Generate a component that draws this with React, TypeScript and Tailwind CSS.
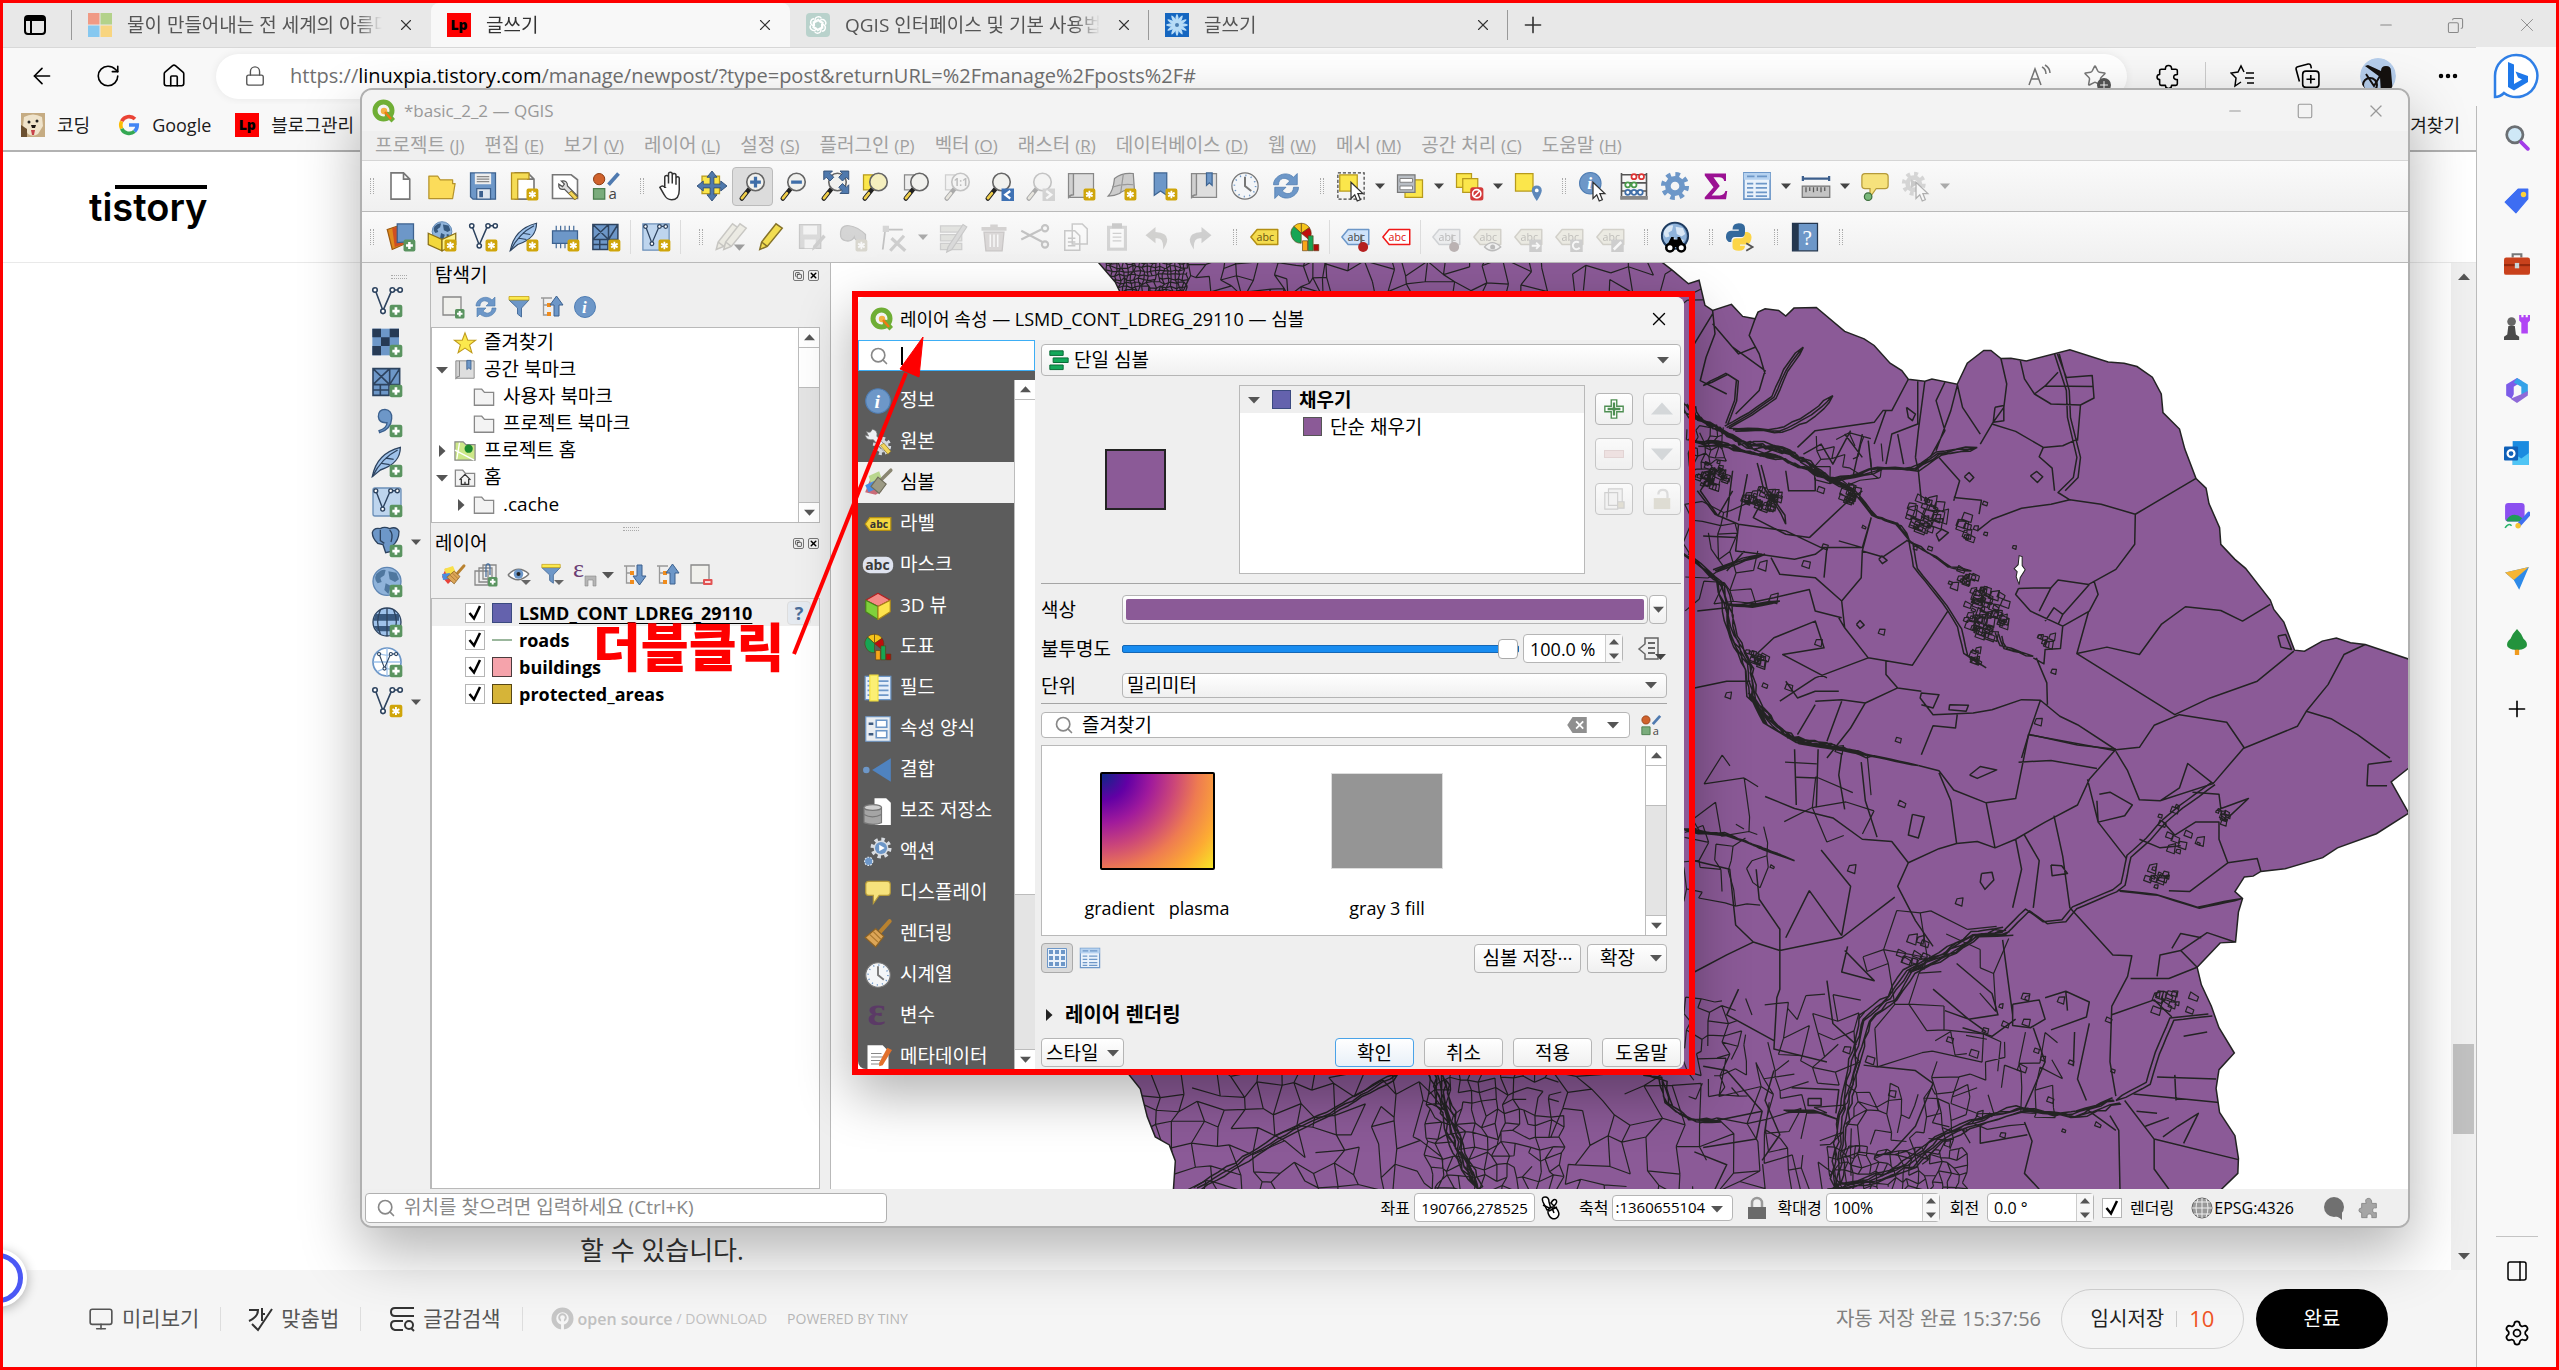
import React from 'react';
import {
  ArrowLeft,
  RotateCw,
  House,
  Lock,
  Search,
  Star,
  Plus,
  X,
  Minus,
  Square,
  Copy,
  Settings,
  PanelRight,
  Ellipsis,
  Monitor,
} from 'lucide-react';

/* ------------------------------------------------------------------ */
/* icon artwork, everything on a 24x24 grid                            */
/* ------------------------------------------------------------------ */

const BLUE = '#6d97c8';
const NAVY = '#2d435f';

const NewBadge = () => (
  <g>
    <rect x="14" y="14" width="9.5" height="9.5" rx="1.5" fill="#cfa50a" />
    <path d="M18.7 15.8v6M16.1 17.3l5.2 3M21.3 17.3l-5.2 3" stroke="#fff" strokeWidth="1.4" />
  </g>
);

const AddBadge = () => (
  <g>
    <rect x="14" y="14" width="9.5" height="9.5" rx="1.5" fill="#5a9460" />
    <path d="M18.7 16v5.6M16 18.8h5.5" stroke="#fff" strokeWidth="2" />
  </g>
);

const Lens = ({ fill = '#f1f1ee' }: { fill?: string }) => (
  <g>
    <path d="M9 14.5 3 22" stroke="#222" strokeWidth="3.6" strokeLinecap="round" />
    <path d="M6.3 17.8 3.2 21.7" stroke="#f0cf4b" strokeWidth="2.2" strokeLinecap="round" />
    <circle cx="14" cy="8.8" r="7" fill={fill} stroke="#666" strokeWidth="1.3" />
  </g>
);

const VectorShape = () => (
  <g fill="none" stroke={NAVY} strokeWidth="1.2">
    <path d="M3.5 4 9 18.5 15.5 3.5M17 3h4" />
    <circle cx="3" cy="3" r="1.7" fill="#fff" />
    <circle cx="9" cy="19" r="1.7" fill="#fff" />
    <circle cx="16" cy="3" r="1.7" fill="#fff" />
    <circle cx="21.8" cy="3" r="1.7" fill="#fff" />
  </g>
);

const Feather = () => (
  <g>
    <path d="M1 23C3 12 10 4 22 1c0 7-3 13-15 17z" fill="#9fc2ea" stroke={NAVY} strokeWidth="1" />
    <path d="M1 23C6 13 12 7 20 3M8 13l6 1M11 9l6 1" stroke={NAVY} strokeWidth="1" fill="none" />
  </g>
);

const MeshGrid = () => (
  <g stroke={NAVY} strokeWidth="1.2" fill={BLUE}>
    <path d="M1.5 2h20v12h-20zM1.5 14h12v8h-12zM14 2v12M1.5 2l12.5 12M14 2 1.5 14M21.5 2 14 14M7 14v8M1.5 18h12" />
  </g>
);

const Globe = ({ land = '#4f779f' }: { land?: string }) => (
  <g>
    <circle cx="12" cy="11.5" r="10.5" fill="#8fb3da" stroke="#5f86b3" />
    <path d="M4 6q4-4 7-3l-1 4-3 2 1 3-3 1q-3-3-1-7zM13 4l6 1 2 5-3 2-4-2zM11 13l4 2-2 6-3-3zM17 14l3 1-3 4z" fill={land} />
  </g>
);

const LabelTag = ({ fill = '#f4dc4e', line = '#b38f12', text = '#6b5510' }) => (
  <g>
    <path d="M1.5 12 6.5 6H23v12H6.5z" fill={fill} stroke={line} strokeWidth="1.2" strokeLinejoin="round" />
    <text x="6" y="15" fontSize="8.5" fontFamily="Open Sans, sans-serif" fill={text}>abc</text>
  </g>
);

const Doc = ({ x = 4 }: { x?: number }) => (
  <path d={`M${x} 1.5h10l5 5v16h-15zM${x + 10} 1.5v5h5`} fill="#fff" stroke="#777" strokeWidth="1.3" />
);

const Refresh = () => (
  <g fill={BLUE} stroke="#4a78ad" strokeWidth=".6">
    <path d="M2 11C2 4 12-1 18 5l3-3v9h-9l3-3C11 4 6 6 6 11z" />
    <path d="M22 13c0 7-10 12-16 6l-3 3v-9h9l-3 3c4 4 9 2 9-3z" />
  </g>
);

const Gear = ({ fill = BLUE }: { fill?: string }) => (
  <g>
    <circle cx="12" cy="12" r="9" fill="none" stroke={fill} strokeWidth="4.5" strokeDasharray="3.5 3.57" />
    <circle cx="12" cy="12" r="5.7" fill="none" stroke={fill} strokeWidth="4.5" />
  </g>
);

const Clock = () => (
  <g>
    <circle cx="12" cy="12" r="10.5" fill="#f4f6f8" stroke="#777" />
    <circle cx="12" cy="12" r="8.5" fill="none" stroke={BLUE} strokeWidth="1.3" strokeDasharray="1 3.45" />
    <path d="M12 4.5V12l5 4" stroke="#777" strokeWidth="1.6" fill="none" />
  </g>
);

const Book = () => (
  <g>
    <path d="M2 2h4v17q-4 0-4 3z" fill="#d0d0d0" stroke="#888" />
    <path d="M6 2h16v19H3q0-2 3-2z" fill="#dedede" stroke="#888" />
  </g>
);

const Info = () => (
  <g>
    <circle cx="12" cy="12" r="10.5" fill={BLUE} stroke="#4f7db3" />
    <text x="9" y="18" fontSize="17" fontStyle="italic" fontWeight="bold" fontFamily="Liberation Serif, serif" fill="#fff">i</text>
  </g>
);

const Funnel = () => (
  <g>
    <path d="M2 5h20l-7.5 8v9l-4-3v-6z" fill={BLUE} stroke="#4a6f9c" />
    <path d="M2 1.5h20V5H2z" fill="#fbe94d" stroke="#c4a21a" strokeWidth=".8" />
  </g>
);

const TreeArrow = ({ down = false }: { down?: boolean }) => (
  <g>
    <path d="M1 3h11M3.5 3v17h4M3.5 10h4" stroke="#999" strokeWidth="1.3" fill="none" />
    <path d="M7 8h4v4H7zM7 17h4v4H7z" fill="#f08c1c" />
    <path d={down ? 'M14 2h5v11h4l-6.5 9L10 13h4z' : 'M14 21h5V10h4l-6.5-9L10 10h4z'} fill={BLUE} stroke="#3c618f" />
  </g>
);

const Folder = () => <path d="M1.5 3.5h8l3 3.5h10v14h-21z" fill="#f3f3f3" stroke="#888" strokeWidth="1.4" />;

const Pencil = () => (
  <path d="M3 22l1.5-6L16 1.5l5 3.5L9 19.5zM4.5 16 9 19.5" fill="#f2dd50" stroke="#86732a" strokeWidth="1.2" />
);

const Brush = () => (
  <g>
    <path d="M22 1 14 10" stroke="#b9822f" strokeWidth="3.5" strokeLinecap="round" />
    <path d="M10 7.5 17 14l-7 9-9-8z" fill="#dca557" stroke="#8f6322" />
    <path d="M5 12.5 12 19M8 10l6.5 6.5" stroke="#a9772e" />
  </g>
);

const PieBars = () => (
  <g stroke="#5a3c10" strokeWidth=".5">
    <path d="M9 9V1a8 8 0 0 1 6.5 3.5z" fill="#f6c51b" />
    <path d="M9 9 3 3.5A8 8 0 0 1 9 1z" fill="#f6c51b" />
    <path d="M9 9l6.5-4.5A8 8 0 0 1 15 14z" fill="#c00d0d" />
    <path d="M9 9v8A8 8 0 0 1 3 3.5z" fill="#17a554" />
    <path d="M10 15h4v8h-4z" fill="#f9a51a" />
    <path d="M14.5 11h4v12h-4z" fill="#17a554" />
    <path d="M19 18h4v5h-4z" fill="#b30c0c" />
  </g>
);

const Bubble = () => (
  <path d="M4 2h16q2.5 0 2.5 2.5v7q0 2.5-2.5 2.5h-7l-5 7v-7H4q-2.5 0-2.5-2.5v-7Q1.5 2 4 2z" fill="#f6e27c" stroke="#b59a3a" />
);

const Cursor = () => <path d="M12 9v13l3-3 2 5 2.5-1-2-5h4z" fill="#fff" stroke="#333" strokeWidth="1" />;

const StyleMgr = () => (
  <g>
    <circle cx="6.5" cy="6.5" r="4.5" fill="#d0622c" stroke="#8d3c14" strokeWidth=".8" />
    <path d="M14 11 22 2" stroke="#4f7ab0" strokeWidth="3" />
    <path d="M2 14h9v8.5H2z" fill="#7aac7c" stroke="#4a7d4d" />
    <text x="14" y="22.5" fontSize="12" fontFamily="Open Sans, sans-serif" fill="#444">a</text>
  </g>
);

const TableIcon = () => (
  <g>
    <path d="M1.5 1.5h21v21h-21z" fill="#eaf2fb" stroke={BLUE} strokeWidth="1.3" />
    <path d="M1.5 1.5h21V7h-21z" fill="#b6d2f0" />
    <path d="M4 4.3h6M12 4.3h8M4 10h5M11 10h9M4 13.5h5M11 13.5h9M4 17h5M11 17h9M4 20h5M11 20h9" stroke={BLUE} strokeWidth="1.4" />
  </g>
);

const art: Record<string, React.ReactNode> = {
  new: <Doc />,
  open: <path d="M1.5 4h7l2 3h10v3h2l-2 12H1.5z" fill="#fbdc5a" stroke="#b5932b" strokeLinejoin="round" />,
  save: (
    <g>
      <path d="M2 1.5h20v21H4l-2-2z" fill={BLUE} stroke="#3d618e" />
      <path d="M5.5 2h13v8.5h-13z" fill="#eee" />
      <path d="M7 4.5h10M7 6.5h10M7 8.5h10" stroke="#888" />
      <path d="M7 14h11v8.5H7z" fill="#dfe6ee" stroke="#3d618e" />
      <path d="M9 16h3v5H9z" fill="#3d618e" />
    </g>
  ),
  layoutNew: (
    <g>
      <Doc x={5} />
      <path d="M2 1.5h14v5H7v16H2z" fill="#f5dc55" stroke="#b38f1c" />
      <NewBadge />
    </g>
  ),
  layoutMgr: (
    <g>
      <path d="M2 3h15l5 4v15H2z" fill="#fff" stroke="#777" strokeWidth="1.3" />
      <path d="M9 8q5-1 5 4l8 8-2.5 2.5-8-8q-5 1-4.5-4l3 2 1.5-2z" fill="#ddd" stroke="#555" />
      <path d="M17 16l5 5-2 2-5-5z" fill="#f2d559" stroke="#8f7420" strokeWidth=".8" />
    </g>
  ),
  style: <StyleMgr />,
  hand: (
    <path d="M7 13V5q0-1.5 1.5-1.5T10 5v5V2.5Q10 1 11.5 1T13 2.5V10 3.5Q13 2 14.5 2T16 3.5V11 6q0-1.5 1.3-1.5T18.600 6v9q0 8-6 8-4 0-6-4l-3.5-6q2-2 4 0z" fill="#fff" stroke="#333" strokeWidth="1.2" />
  ),
  pan: (
    <g>
      <path d="M4 4h14v14H4z" fill="#fbe64b" stroke="#b79a1c" />
      <path d="M12 0l4 5h-2.5v5.500H19V8l5 4-5 4v-2.500h-5.500V19H16l-4 5-4-5h2.500v-5.500H5V16l-5-4 5-4v2.500h5.500V5H8z" fill="#4f79ad" stroke="#2e4c73" strokeWidth=".7" />
    </g>
  ),
  zoomIn: <g><Lens /><path d="M14 4.5v8.6M9.7 8.8h8.6" stroke="#3f6ea8" strokeWidth="2.6" /></g>,
  zoomOut: <g><Lens /><path d="M9.7 8.8h8.6" stroke="#3f6ea8" strokeWidth="2.6" /></g>,
  zoomFull: (
    <g>
      <Lens />
      <path d="M3 0h7L8 2l3 3-3 3-3-3-2 2zM23 0h-7l2 2-3 3 3 3 3-3 2 2zM23 18h-7l2-2-3-3 3-3 3 3 2-2z" fill="#4f79ad" stroke="#2e4c73" strokeWidth=".7" />
    </g>
  ),
  zoomSel: <g><path d="M2 3h9v12H2z" fill="#fbe64b" stroke="#b79a1c" /><Lens fill="#f5efbe" /></g>,
  zoomLayer: <g><path d="M2 3h9v12H2z" fill="#eee" stroke="#888" /><Lens /></g>,
  zoomNative: <g><path d="M2 3h9v12H2z" fill="#eee" stroke="#888" /><Lens /><text x="8.5" y="12" fontSize="8" fontFamily="Open Sans, sans-serif" fontWeight="bold" fill="#555">1:1</text></g>,
  zoomLast: <g><Lens /><path d="M14 14h10v10H14z" fill="#3f72b4" /><path d="M21 16l-4 3 4 3" stroke="#fff" strokeWidth="1.8" fill="none" /></g>,
  zoomNext: <g><Lens /><path d="M14 14h10v10H14z" fill="#999" /><path d="M17 16l4 3-4 3" stroke="#fff" strokeWidth="1.8" fill="none" /></g>,
  mapView: <g><Book /><NewBadge /></g>,
  view3d: <g><path d="M1 20q4-4 5-14 6-5 15-4l1 14q-8-2-12 2-4 2-9 2z" fill="#ccc" stroke="#888" /><path d="M4 13q8-3 17-2M13 3l-2 14" stroke="#999" fill="none" /><NewBadge /></g>,
  bookmarkNew: <g><path d="M5 1.5h10v18l-5-3.5-5 3.5z" fill={BLUE} stroke="#3f6592" /><NewBadge /></g>,
  bookmarks: <g><Book /><path d="M14 1.5h4.5v10l-2.2-2-2.3 2z" fill={BLUE} stroke="#3f6592" /></g>,
  clock: <Clock />,
  refresh: <Refresh />,
  select: <g><path d="M1.5 1.5h21v21h-21z" fill="none" stroke="#444" strokeDasharray="2.5 1.5" /><path d="M3 3h14v13H3z" fill="#fbe64b" stroke="#b79a1c" /><Cursor /></g>,
  selectForm: <g><path d="M8 7h14v14H8z" fill="#fbe64b" stroke="#b79a1c" /><path d="M2 3h14v14H2z" fill="#b9bec4" stroke="#777" /><path d="M4 6h10v3H4zM4 12h10v3H4z" fill="#fff" stroke="#777" strokeWidth=".7" /></g>,
  deselect: <g><path d="M2 2h12v11H2z" fill="#fbe64b" stroke="#b79a1c" /><path d="M7 6h12v11H7z" fill="#fbe64b" stroke="#b79a1c" /><rect x="13" y="13" width="10.5" height="10.5" rx="2" fill="#d33a3a" /><circle cx="18.2" cy="18.2" r="3.3" fill="none" stroke="#fff" strokeWidth="1.3" /><path d="M16 20.5l4.5-4.5" stroke="#fff" strokeWidth="1.3" /></g>,
  selectLoc: <g><path d="M2 2h14v14H2z" fill="#fbe64b" stroke="#b79a1c" /><path d="M19 24q-4-6-4-8.500a4 4 0 0 1 8 0Q23 18 19 24z" fill="#5e88ba" /><circle cx="19" cy="15.5" r="1.5" fill="#fff" /></g>,
  identify: <g><g transform="scale(.82)"><Info /></g><Cursor /></g>,
  abacus: (
    <g>
      <path d="M2 1.5v21M22 1.5v21M2 3h20M2 9.500h20M2 16h20" stroke="#555" strokeWidth="1.3" />
      <path d="M1 20h22v3H1z" fill="#888" />
      <g fill="#fff" strokeWidth="1.4">
        <circle cx="12" cy="4.5" r="2" stroke="#d33" /><circle cx="18" cy="4.5" r="2" stroke="#d33" />
        <circle cx="7" cy="11" r="2" stroke="#4a9a4a" /><circle cx="12" cy="11" r="2" stroke="#4a9a4a" />
        <circle cx="7" cy="17" r="2" stroke="#3f6ea8" /><circle cx="12" cy="17" r="2" stroke="#3f6ea8" /><circle cx="17" cy="17" r="2" stroke="#3f6ea8" />
      </g>
    </g>
  ),
  gear: <Gear />,
  sigma: <path d="M3 2h17v6h-1.5q-.5-3-4-3H10l5 7-6.5 7.5H15q3.5 0 4.500-3.500H21l-1 6.500H3v-1.500L10 13 3 3.500z" fill="#9b1193" />,
  table: <TableIcon />,
  ruler: <g><path d="M1.5 4v4M22.5 4v4M1.5 6h21" stroke="#3c5f8d" strokeWidth="1.8" /><path d="M1 12h22v9H1z" fill="#c4c4c4" stroke="#777" /><path d="M4 13v4M7 13v3M10 13v4M13 13v3M16 13v4M19 13v3" stroke="#555" /></g>,
  bubble: <g><Bubble /><circle cx="6.5" cy="20.5" r="3" fill="#79b87a" stroke="#3d6e3e" /></g>,
  gearPlay: <g><g transform="scale(.85)"><Gear fill="#999" /></g><path d="M8 6.500 14 10l-6 3.500z" fill="#777" /><Cursor /></g>,

  dataSource: <g><path d="M1 6l9-3 4 15-9 4z" fill="#e08a1c" stroke="#9c5910" /><path d="M5 5l9-3 2 15-9 3z" fill="#cf4f22" /><path d="M9 1.5h13v14l-13 1z" fill={BLUE} stroke="#3d618e" /><AddBadge /></g>,
  geopackage: <g><g transform="translate(3 -1) scale(.75)"><Globe land="#36597f" /></g><path d="M1 9l11 5v9L1 18z" fill="#f3d83c" stroke="#8a6f16" /><path d="M23 9l-11 5v9l11-5z" fill="#fbf08a" stroke="#8a6f16" /><NewBadge /></g>,
  vectorNew: <g><VectorShape /><NewBadge /></g>,
  featherNew: <g><Feather /><NewBadge /></g>,
  chip: <g><path d="M5 3v18M8.5 3v18M12 3v18M15.5 3v18M19 3v18" stroke="#4a6f9c" /><path d="M2 7h20v10H2z" fill={BLUE} stroke="#3d618e" /><NewBadge /></g>,
  meshNew: <g><MeshGrid /><NewBadge /></g>,
  virtualNew: <g><path d="M1.5 1.5h21v21h-21z" fill="#bed5ee" stroke="#6b8fb8" /><g transform="translate(1 1) scale(.86)"><VectorShape /></g><NewBadge /></g>,
  pencils: <g><g transform="translate(-2 0)"><Pencil /></g><g transform="translate(4 0)"><Pencil /></g><path d="M15 18h9l-4.500 5z" fill="#000" /></g>,
  pencil: <Pencil />,
  saveEdit: <g><path d="M2 2h17v19H2z" fill="#aaa" stroke="#777" /><path d="M5 3h11v7H5zM6 14h9v7H6z" fill="#eee" /><path d="M12 23l1-4 8-9 2 2-8 9z" fill="#888" /></g>,
  digitize: <g><path d="M2 10Q2 2 9 3q7 1 13 7v6q-8 1-9-4-2 4-7 3Q2 14 2 10z" fill="#999" stroke="#666" /><NewBadge /></g>,
  vertex: <g><path d="M3 22 5 6h14" stroke="#666" fill="none" strokeWidth="1.4" /><path d="M3 3h5v5H3z" fill="#999" /><path d="M10 13l11 10M20 11 9 23" stroke="#888" strokeWidth="2.6" /></g>,
  attrs: <g><path d="M2 3h17v5H2zM2 10h17v5H2zM2 17h17v5H2z" fill="#b9c58c" stroke="#888" /><path d="M8 20 20 2l3 2-12 18-4 2z" fill="#aaa" stroke="#777" /></g>,
  trash: <g><path d="M4 8h16l-1.5 15h-13z" fill="#cf9a92" stroke="#9b6a64" /><path d="M2 4h20v3H2zM9 2h6v2H9z" fill="#b38680" /><path d="M9 10v10M12 10v10M15 10v10" stroke="#fff" strokeWidth="1.2" /></g>,
  cut: <g fill="none" stroke="#666" strokeWidth="1.7"><path d="M1 7l17 9M1 14l16-8" /><circle cx="20" cy="5" r="2.5" /><circle cx="20" cy="18" r="2.5" /></g>,
  copy: <g fill="#fff" stroke="#777" strokeWidth="1.2"><path d="M9 1.5h8l4 4v12H9zM3 7h8l4 4v11.500H3z" /><path d="M5.5 13h6M5.5 16h6M5.5 19h6" /></g>,
  paste: <g><path d="M4 3h16v20H4z" fill="#999" /><path d="M6.5 5.5h11v15h-11z" fill="#fff" /><path d="M8 1h8v4H8z" fill="#777" /><path d="M8.5 9h7M8.5 12h7M8.5 15h7" stroke="#888" /></g>,
  undo: <path d="M10 4 2 10.5 10 17v-4q7-1 6 9 9-13-6-14z" fill="#9a8f74" />,
  redo: <path d="m14 4 8 6.5-8 6.5v-4q-7-1-6 9-9-13 6-14z" fill="#888" />,
  label: <LabelTag />,
  pie: <PieBars />,
  labelPin: <g><LabelTag fill="#cfe3fa" line="#6d97c8" text="#444" /><path d="M17 10v8" stroke="#666" strokeWidth="1.5" /><circle cx="18.5" cy="20" r="4" fill="#b52020" /></g>,
  labelRed: <LabelTag fill="#fff" line="#f01818" text="#e01010" />,
  labelEye: <g><LabelTag /><path d="M10 20q6-7 13 0-7 6-13 0z" fill="#eee" stroke="#555" /><circle cx="16.5" cy="20" r="2" fill="#555" /></g>,
  labelMove: <g><LabelTag /><path d="M13 14h10v10H13z" fill="#888" /><path d="M15 19h6M18.5 16.5 21 19l-2.5 2.5" stroke="#fff" strokeWidth="1.5" fill="none" /></g>,
  labelRot: <g><LabelTag /><path d="M13 14h10v10H13z" fill="#888" /><path d="M20 16.5a3 3 0 1 0 .5 4" stroke="#fff" strokeWidth="1.5" fill="none" /></g>,
  labelEdit: <g><LabelTag /><path d="M13 14h10v10H13z" fill="#888" /><path d="M15 22l6-6" stroke="#fff" strokeWidth="2" /></g>,
  metasearch: <g><g transform="scale(.96)"><Globe land="#d9e7f5" /></g><circle cx="12" cy="11" r="10.5" fill="none" stroke="#1f3c60" strokeWidth="1.5" /><path d="M9 12h2v2h3v-2h2l4 8H5z" fill="#000" /><circle cx="8" cy="20.5" r="3" fill="#fff" stroke="#000" strokeWidth="2" /><circle cx="17" cy="20.5" r="3" fill="#fff" stroke="#000" strokeWidth="2" /></g>,
  python: <g><path d="M6 6q0-5 5-5t5 4v4q0 3-3 3H8q-3 0-3 4H3q-3-2-2-6 1-3 4-3h6V6z" fill="#34699c" /><path d="M16 8h2q4 1 3 6-1 4-4 4h-5v1h4q0 4-5 4t-5-3v-4q0-3 3-3h4q3 0 3-5z" fill="#fcd547" /><path d="M17 17l5 3-5 3" stroke="#555" strokeWidth="1.5" fill="none" /></g>,
  help: <g><path d="M2 1h20v22H2z" fill={BLUE} stroke="#24374f" /><path d="M2 1h5v22H2z" fill="#24374f" /><text x="10" y="18" fontSize="17" fontFamily="Liberation Serif, serif" fill="#fff">?</text></g>,

  vectorAdd: <g><VectorShape /><AddBadge /></g>,
  rasterAdd: <g><path d="M1 2h20v20H1z" fill={BLUE} /><path d="M1 2h6.500v6.500H1zM14 2h7v6.500h-7zM7.500 8.500H14V15H7.500zM1 15h6.500v7H1z" fill="#263a55" /><AddBadge /></g>,
  meshAdd: <g><MeshGrid /><AddBadge /></g>,
  commaAdd: <g><path d="M6 18.500q6-2 6-6-6 .5-6.500-4.500Q5.500 2.500 10.500 2.500q5.500.5 5 7Q15 17.500 6.500 20z" fill={BLUE} stroke="#3d618e" /><AddBadge /></g>,
  featherAdd: <g><Feather /><AddBadge /></g>,
  virtualAdd: <g><rect x="1.5" y="1.5" width="21" height="21" rx="1.5" fill="#bed5ee" stroke="#6b8fb8" /><g transform="translate(1 1) scale(.86)"><VectorShape /></g><AddBadge /></g>,
  postgis: <g><path d="M1 5q1-4 6-3 3-2 7 0 5-2 7 2 0 7-5 11l-1 4-4 1-2-6-4-1Q1 9 1 5z" fill={BLUE} stroke={NAVY} /><path d="M7 3v8l3 2M14 3q3 3 1 9" stroke={NAVY} fill="none" /><AddBadge /></g>,
  wms: <g><Globe /><AddBadge /></g>,
  wcs: <g><circle cx="12" cy="12" r="10.5" fill="#9fc2ea" stroke={NAVY} /><path d="M3 6h18v5H2zM2 15h20l-3 4H5z" fill="#39597f" /><path d="M12 1.5v21M7 3q-4 9 0 18M17 3q4 9 0 18" stroke={NAVY} fill="none" /><AddBadge /></g>,
  wfs: <g><circle cx="12" cy="12" r="10.5" fill="#fff" stroke={BLUE} strokeWidth="1.3" /><path d="M2 12h20M12 1.5v21M5 5q7 4 14 0M5 19q7-4 14 0" stroke="#9fc2ea" fill="none" /><g transform="translate(4 4) scale(.68)"><VectorShape /></g><AddBadge /></g>,

  addSquare: <g><path d="M2 2h18v18H2z" fill="#f0f0ec" stroke="#888" strokeWidth="1.3" /><AddBadge /></g>,
  funnel: <Funnel />,
  collapse: <TreeArrow />,
  expand: <TreeArrow down />,
  info: <Info />,
  paint: <g><path d="M1 14l4-9 6 12-4 4z" fill="#e8433a" /><path d="M3 6l9-3 3 7-8 5z" fill="#f8e04a" /><path d="M1 11l8-1-1 6-6 1z" fill="#4b8ce0" /><g transform="translate(5 2) scale(.82)"><Brush /></g></g>,
  groupAdd: <g fill="#eee" stroke="#888" strokeWidth="1.3"><path d="M1 8h13v14H1zM5 5h13v14H5zM9 2h13v14H9z" /><path d="M12 14V4q0-3 2-3t2 3v8" fill="none" stroke="#4a6f9c" /><g stroke="none"><AddBadge /></g></g>,
  eye: <g><path d="M1 12Q11 1 22 11M1 12q10 10 21-1" fill="#fff" stroke="#777" strokeWidth="1.5" /><circle cx="11.5" cy="11" r="4.8" fill={BLUE} /><circle cx="11.5" cy="11" r="2" fill="#222" /><path d="M14 17h10l-5 5z" fill="#666" /></g>,
  funnelMenu: <g><g transform="scale(.92)"><Funnel /></g><path d="M14 17h10l-5 5z" fill="#666" /></g>,
  epsFilter: <g><text x="0" y="14" fontSize="26" fontFamily="Liberation Serif, serif" fill="#6b3d74">ε</text><path d="M12 13h11v10h-3v-6h-5v6h-3z" fill="#b5b5b5" stroke="#888" strokeWidth=".6" /></g>,
  removeSquare: <g><path d="M2 2h18v18H2z" fill="#f0f0ec" stroke="#888" strokeWidth="1.3" /><rect x="14" y="16" width="9.5" height="6" rx="1" fill="#e25252" /><path d="M16 19h5.5" stroke="#fff" strokeWidth="1.6" /></g>,
  star: <path d="M12 1l3 8h8.500L17 14l2.500 8.500L12 17.500 4.500 22.500 7 14 .5 9H9z" fill="#fbe94d" stroke="#bf9a1a" strokeWidth="1.2" />,
  folder: <Folder />,
  projectHome: <g><path d="M1 2h9l3 3h10v17H1z" fill="#cde888" stroke="#888" strokeWidth="1.3" /><path d="M1 11 22 22M6 3l-3 18" stroke="#fff" strokeWidth="1.5" /><circle cx="16" cy="9.5" r="4.5" fill="#1d8a2d" /></g>,
  home: <g><Folder /><path d="M6 14l6-6 6 6M8 13v6h8v-6M12 19v-3" stroke="#333" fill="none" strokeWidth="1.4" /></g>,

  source: (
    <g>
      <g transform="translate(7 7) scale(.7)"><Gear fill="#d3d8de" /></g>
      <path d="M2 3q4 2 5-2 5 1 4 6l9 10-3 3-9-10Q2 11 1 6l3 1z" fill="#eceff2" stroke="#777" strokeWidth=".6" />
      <path d="M14 15l3-2 6 7-2.500 2.500z" fill="#f2d559" stroke="#8f7420" strokeWidth=".6" />
    </g>
  ),
  symbology: <g><path d="M1 20l5-13 9 12-5 3z" fill="#c96b78" /><path d="M4 6l9-4 3 9-9 5z" fill="#b9d68e" /><path d="M1 14l8-4 3 6-8 4z" fill="#4b8ce0" /><path d="M23 1l-8 8" stroke="#8a8672" strokeWidth="3" strokeLinecap="round" /><path d="M12 7l7 6-6 8-7-6z" fill="#9c9a84" stroke="#6f6d5c" /></g>,
  labelBold: <g><path d="M1 12 5 6.500h18v11H5z" fill="#f4d63e" stroke="#b38f12" /><text x="5" y="15" fontSize="9" fontWeight="bold" fontFamily="Open Sans, sans-serif" fill="#333">abc</text></g>,
  mask: <g><rect x="-1" y="5" width="26" height="14" rx="6" fill="#dfe3ef" /><text x="1" y="16" fontSize="12" fontWeight="bold" fontFamily="Open Sans, sans-serif" fill="#3a3a3a">abc</text></g>,
  cube: <g strokeWidth="1" strokeLinejoin="round"><path d="M12 1 22.500 7 12 12.500 1.500 7z" fill="#f48a85" stroke="#b22020" /><path d="M1.500 7 12 12.500V23.500L1.500 17z" fill="#7fd13b" stroke="#47821a" /><path d="M22.500 7 12 12.500V23.500L22.500 17z" fill="#fde34d" stroke="#a8851a" /></g>,
  fields: <g><path d="M1 2h22v20H1z" fill="#e6effa" stroke={BLUE} /><path d="M3 6h18M3 10h18M3 14h18M3 18h18" stroke={BLUE} strokeWidth="1.5" /><path d="M5 1h7v22H5z" fill="#fbef74" stroke="#f3e03e" /></g>,
  form: <g><path d="M1.500 1.500h21v21h-21z" fill="#e9edf1" stroke={BLUE} /><path d="M4 7.500h4M4 16.500h4" stroke="#3d5a80" strokeWidth="2" /><path d="M10.500 4.500h9v6h-9zM10.500 13.500h9v6h-9z" fill="#fff" stroke={BLUE} strokeWidth="1.4" /></g>,
  join: <g><circle cx="2" cy="12" r="2.8" fill={BLUE} /><path d="M7 12 23 2v20z" fill="#4f83c0" /></g>,
  storage: <g><path d="M9 1h10l4 4v19H9z" fill="#fff" /><path d="M0 9h15v13q-7 3-15 0z" fill="#a5a5a5" stroke="#777" /><ellipse cx="7.5" cy="9" rx="7.5" ry="2.5" fill="#cfcfcf" stroke="#777" /><path d="M0 15q7 4 15 0" stroke="#777" fill="none" /></g>,
  action: <g><g transform="translate(5 -1) scale(.8)"><Gear fill="#d9dde2" /><circle cx="12" cy="12" r="6.5" fill={BLUE} /><path d="M10 8.500 16 12l-6 3.500z" fill="#fff" /></g><circle cx="4" cy="20" r="3.5" fill={BLUE} stroke="#dfe6ee" strokeDasharray="1.5 1" /></g>,
  display: <Bubble />,
  rendering: <Brush />,
  variables: <text x="3" y="20" fontSize="36" fontWeight="bold" fontFamily="Liberation Serif, serif" fill="#5b3a66">ε</text>,
  metadata: <g><path d="M3 2h13l5 5v17H3z" fill="#fff" /><path d="M6 9h9M6 12h11M6 15h8M6 18h9" stroke="#888" /><path d="M13 17 20 4l4 2-8 13-3 1z" fill="#e2702c" /></g>,
  single: <g fill="#13a85a" stroke="#0a6b37" strokeWidth="1.2"><path d="M1 1h16v5.500H1zM5 9.500h18v5.500H5zM1 18h16v5.500H1z" /></g>,
  green: <path d="M9 2h6v7h7v6h-7v7H9v-7H2V9h7z" fill="#fff" stroke="#4f8f53" strokeWidth="1.5" />,
  puzzle: <path d="M4 7h5q-2-5 2-5.500T15 7h5v5q-4-1-4 2.500T20 17v5.500h-5q1-4-2.500-4T10 22.500H4V17q-3 0-3-2.500T4 12z" />,
};

const Ico = ({ name, className = 'size-7', off = false }: { name: string; className?: string; off?: boolean }) => (
  <svg viewBox="0 0 24 24" className={`${className} shrink-0 overflow-visible ${off ? 'opacity-35 grayscale-[85%]' : ''}`} fill="none">
    {art[name]}
  </svg>
);

const Tri = ({ dir = 'down', className = 'size-3', color = '#555' }: { dir?: 'down' | 'up' | 'right'; className?: string; color?: string }) => (
  <svg viewBox="0 0 12 12" className={`${className} pointer-events-none shrink-0`}>
    <path d={dir === 'down' ? 'M0 3h12L6 9.500z' : dir === 'up' ? 'M0 9h12L6 2.500z' : 'M3 0v12l6.500-6z'} fill={color} />
  </svg>
);

const QgisLogo = ({ className }: { className: string }) => (
  <svg viewBox="0 0 24 24" className={`${className} shrink-0`} fill="none">
    <circle cx="11.5" cy="11.5" r="8.5" stroke="#6fae35" strokeWidth="5" />
    <path d="M12 12l5 1 6 7-3.500 3.500L13 17z" fill="#6fae35" />
    <circle cx="12" cy="12" r="3.2" fill="#f3b143" />
    <path d="m13 13 6 7" stroke="#ee7913" strokeWidth="2.5" />
  </svg>
);

const LpIcon = () => (
  <span className="flex size-6 shrink-0 items-center justify-center bg-[#fe0000] text-sm font-extrabold text-black">Lp</span>
);

/* ------------------------------------------------------------------ */
/* browser chrome                                                      */
/* ------------------------------------------------------------------ */

const MsIcon = () => (
  <svg viewBox="0 0 24 24" className="size-6 shrink-0">
    <path d="M0 0h11.500v11.500H0z" fill="#f09a85" />
    <path d="M12.500 0H24v11.500H12.500z" fill="#b3d28a" />
    <path d="M0 12.500h11.500V24H0z" fill="#86c8f0" />
    <path d="M12.500 12.500H24V24H12.500z" fill="#f8d580" />
  </svg>
);

const GptIcon = () => (
  <svg viewBox="0 0 24 24" className="size-6 shrink-0" fill="none" stroke="#fff" strokeWidth="1.4">
    <rect width="24" height="24" rx="4" fill="#b9d2cc" stroke="none" />
    {[0, 60, 120, 180, 240, 300].map((a) => (
      <path key={a} d="M9 9.500V7a3.500 3.500 0 0 1 6.500-1.500M9 9.500l4-2.300 4.500 2.600" transform={`rotate(${a} 12 12)`} />
    ))}
  </svg>
);

const FlowerIcon = () => (
  <svg viewBox="0 0 24 24" className="size-6 shrink-0">
    <path d="M0 0h24v24H0z" fill="#1566c0" />
    {[0, 30, 60, 90, 120, 150].map((a) => (
      <ellipse key={a} cx="12" cy="12" rx="2" ry="11" fill="#b7dcf7" transform={`rotate(${a} 12 12)`} />
    ))}
    <circle cx="12" cy="12" r="2" fill="#4c7fb0" />
  </svg>
);

const TABS = [
  { title: '물이 만들어내는 전 세계의 아름다운', icon: <MsIcon />, active: false, sep: false },
  { title: '글쓰기', icon: <LpIcon />, active: true, sep: false },
  { title: 'QGIS 인터페이스 및 기본 사용법', icon: <GptIcon />, active: false, sep: true },
  { title: '글쓰기', icon: <FlowerIcon />, active: false, sep: true },
];

const TabStrip = () => (
  <div className="flex h-11 items-stretch bg-[#e8e8e8] text-[19px] text-[#555]">
    <div className="flex w-[68px] items-center justify-center pr-1">
      <svg viewBox="0 0 24 24" className="size-6" fill="none" stroke="#000" strokeWidth="2">
        <rect x="2" y="3" width="20" height="18" rx="3" />
        <path d="M3 5.500h18" strokeWidth="5" />
        <path d="M8 8v13" />
      </svg>
    </div>
    <div className="my-auto h-[30px] w-px bg-[#999]" />
    {TABS.map((t, i) => (
      <div
        key={i}
        className={`relative flex w-[359px] items-center gap-[15px] px-4 ${t.active ? 'rounded-t-lg bg-[#f8f8f8] text-[#333]' : ''}`}
      >
        {t.icon}
        <span className="h-7 flex-1 overflow-hidden leading-7 whitespace-nowrap [mask-image:linear-gradient(to_right,black_90%,transparent)]">{t.title}</span>
        <button aria-label="탭 닫기"><X className="size-[18px] text-[#333]" strokeWidth={1.5} /></button>
        {t.sep && <div className="absolute right-0 h-[30px] w-px bg-[#999]" />}
      </div>
    ))}
    <button className="px-3" aria-label="새 탭"><Plus className="size-[26px] text-[#333]" strokeWidth={1.5} /></button>
    <div className="ml-auto flex items-center gap-[52px] pr-[18px] text-[#888]">
      <Minus className="size-[18px]" strokeWidth={1.5} />
      <Copy className="size-[17px] -scale-x-100" strokeWidth={1.5} />
      <X className="size-[22px]" strokeWidth={1} />
    </div>
  </div>
);

const AddressBar = () => (
  <div className="flex h-[57px] items-center border-t border-[#d8d8d8] bg-[#f8f8f8] pr-4">
    <div className="flex w-[213px] items-center gap-10 pl-[26px]">
      <button aria-label="뒤로"><ArrowLeft className="size-[26px] text-black" strokeWidth={1.5} /></button>
      <button aria-label="새로 고침"><RotateCw className="size-[26px] text-black" strokeWidth={1.5} /></button>
      <button aria-label="홈"><House className="size-[26px] text-black" strokeWidth={1.5} /></button>
    </div>
    <div className="flex h-[45px] flex-1 items-center rounded-full bg-white pr-5 pl-7 shadow-[0_0_8px_rgba(0,0,0,0.07)]">
      <Lock className="mr-6 size-[22px] text-[#555]" strokeWidth={1.5} />
      <p className="flex-1 text-[20px] whitespace-nowrap text-[#707070]">
        https://<span className="text-black">linuxpia.tistory.com</span>/manage/newpost/?type=post&amp;returnURL=%2Fmanage%2Fposts%2F#
      </p>
      <svg viewBox="0 0 24 24" className="mr-8 size-6" fill="none" stroke="#777" strokeWidth="1.5">
        <path d="M2 21 8 5l6 16M4 15h8M15 3q4 2 4 7M18 1q5 3 5 8" />
      </svg>
      <span className="relative">
        <Star className="size-6 text-[#777]" strokeWidth={1.5} />
        <span className="absolute -right-1 -bottom-1 flex size-3.5 items-center justify-center rounded-full bg-[#555]">
          <Plus className="size-3 text-white" />
        </span>
      </span>
    </div>
    <div className="flex w-[333px] items-center justify-end gap-10 text-black">
      <svg viewBox="0 0 24 24" className="size-[25px]" fill="none" stroke="#000" strokeWidth="1.5" strokeLinejoin="round">
        <path d="M5 5h4q0-3.500 3-3.500T15 5h4q1.500 0 1.500 1.500V10q-3.500 0-3.500 2.500t3.500 2.500v4q0 1.500-1.500 1.500h-4q0 3-3 3t-3-3H5q-1.500 0-1.500-1.500v-4Q1 15 1 12.500T3.500 10V6.500Q3.500 5 5 5z" />
      </svg>
      <div className="-mx-4 h-7 w-px bg-[#ccc]" />
      <svg viewBox="0 0 24 24" className="size-6" fill="none" stroke="#000" strokeWidth="1.5">
        <path d="M14 8 11 2 8 8 1 9l5 5-1 8 6-4M16 9h8M15 14h9M17 19h7" />
      </svg>
      <svg viewBox="0 0 24 24" className="size-[26px]" fill="none" stroke="#000" strokeWidth="1.5">
        <path d="M5 17 2 6q-.5-2 1.500-2.500L13 1q2-.5 2.500 1.500L16 5" />
        <rect x="8" y="7.500" width="15" height="15" rx="3" />
        <path d="M15.500 11v8M11.500 15h8" />
      </svg>
      <svg viewBox="0 0 36 36" className="size-9 rounded-full">
        <circle cx="18" cy="18" r="18" fill="#b5cdeb" />
        <path d="M5 8l3-1 13 6q0-5 5-5t5 5l2 23H21l-1-17z" fill="#15110f" />
        <circle cx="10" cy="27" r="7" fill="none" stroke="#15110f" strokeWidth="2" />
        <path d="M6 16l8 12 6-10" stroke="#15110f" fill="none" strokeWidth="2" />
      </svg>
      <Ellipsis className="size-6" strokeWidth={2.5} />
    </div>
  </div>
);

const GoogleG = () => (
  <svg viewBox="0 0 24 24" className="size-[22px]" fill="none" strokeWidth="4">
    <path d="M18.500 5.500A9 9 0 0 0 4 8" stroke="#ea4335" />
    <path d="M4 8a9 9 0 0 0 0 8" stroke="#fbbc05" />
    <path d="M4 16a9 9 0 0 0 14 3" stroke="#34a853" />
    <path d="M18 19q3-3 3-7h-9" stroke="#4285f4" />
  </svg>
);

const DogIcon = () => (
  <svg viewBox="0 0 24 24" className="size-6">
    <path d="M0 0h24v24H0z" fill="#c6ac83" />
    <path d="M3 4q9-5 18 0l1 9-5 8q-5 3-10 0l-5-8z" fill="#efe3cb" />
    <path d="M0 12l6 4v8H0z" fill="#6b5031" />
    <circle cx="8" cy="9" r="1.5" fill="#222" />
    <circle cx="16" cy="8" r="1.5" fill="#222" />
    <path d="M10 12h5l-1 3h-3z" fill="#1c1512" />
    <path d="M10 17h4l-1 5h-2z" fill="#c8434a" />
  </svg>
);

const Bookmarks = () => (
  <div className="flex h-12 items-center border-b-2 border-[#b2b2b2] bg-[#f8f8f8] pb-1 pl-[18px] text-lg text-[#1b1b1b]">
    <a href="#" className="flex items-center gap-3"><DogIcon />코딩</a>
    <a href="#" className="ml-7 flex items-center gap-3"><GoogleG />Google</a>
    <a href="#" className="ml-6 flex items-center gap-3"><LpIcon />블로그관리</a>
    <a href="#" className="mr-4 ml-auto">기타 즐겨찾기</a>
  </div>
);

const SIDE_APPS: { label: string; icon: React.ReactNode }[] = [
  { label: '검색', icon: <g><circle cx="10" cy="9" r="7.5" fill="#cfe8f7" stroke="#6b6f73" strokeWidth="2.5" /><path d="m16 16 6 6" stroke="#a33ce8" strokeWidth="3.5" strokeLinecap="round" /></g> },
  { label: '쇼핑', icon: <g><path d="M13 1h9v9L11 23 1 13z" fill="#3d6df2" strokeLinejoin="round" stroke="#3d6df2" /><circle cx="18" cy="6" r="2.5" fill="#fdd23a" /></g> },
  { label: '도구', icon: <g><path d="M8 6V3h8v3" stroke="#777" strokeWidth="2" fill="none" /><rect x="0" y="6" width="24" height="16" rx="2" fill="#c9411c" /><path d="M0 13h24" stroke="#96290d" strokeWidth="2" /><rect x="10" y="11" width="4" height="5" fill="#c9d6dc" /></g> },
  { label: '게임', icon: <g><path d="M14 1h2v2h2V1h2v2h2V1h2v5l-2 2v10h-6V8l-2-2z" fill="#b145f5" /><circle cx="7" cy="7" r="4" fill="#666" /><path d="M4 11h6l1 8 3 2v3H0v-3l3-2z" fill="#4a4a4a" /></g> },
  { label: 'Microsoft 365', icon: <g><path d="M12 1 2 7v10l5 3 2-4V9l8-5z" fill="#7c5ce8" /><path d="M12 1l10 6v8l-6 3V9L9 5z" fill="#35a2e8" /><path d="M22 13v4l-10 7-6-4 10-4z" fill="#8f6ad8" /></g> },
  { label: 'Outlook', icon: <g><path d="M8 1h15v22H8z" fill="#1a8be0" /><path d="M8 12l8 5 7-5v11H8z" fill="#50c5f5" /><rect x="0" y="6" width="13" height="13" rx="1" fill="#0f60b8" /><circle cx="6.5" cy="12.5" r="3.2" stroke="#fff" strokeWidth="2" fill="none" /></g> },
  { label: '이미지', icon: <g><rect x="1" y="0" width="18" height="17" rx="3" fill="#8b50f0" /><path d="M2 16q6-9 15-2v3H3z" fill="#1f9d56" /><path d="m23 10-9 10" stroke="#3f6ff0" strokeWidth="4" strokeLinecap="round" /><circle cx="13" cy="21" r="2.5" fill="#f6c331" /><path d="M1 23q3-5 6-2" stroke="#2ab56c" strokeWidth="1.5" fill="none" /></g> },
  { label: '드롭', icon: <g><path d="M1 6 23 1 14 22 9 13z" fill="#2e8ae8" /><path d="M1 6 23 1 9 13z" fill="#f6b534" /></g> },
  { label: '나무', icon: <g><path d="M10 17h4v7h-4z" fill="#f09b1e" /><path d="M12 0q4 4 6 9 4 3 3 7-3 4-9 3-6 1-9-3-1-4 3-7 2-5 6-9z" fill="#23933d" /></g> },
];

const SideBar = () => (
  <aside className="flex w-20 shrink-0 flex-col items-center bg-[#f8f8f8] pt-[6px]">
    <svg viewBox="0 0 46 46" className="mb-[7px] size-[46px] shrink-0">
      <path d="M23 2a21 21 0 1 1-12 38Q7 44 2 44V23A21 21 0 0 1 23 2z" fill="#fff" stroke="#2f7fe6" strokeWidth="2.5" />
      <path d="M15 9l6 2.500V31l8-4.500-4-2-2.500-6L35 23v6L21 37.500 15 34z" fill="#1e78ea" />
    </svg>
    <div className="flex w-full flex-1 flex-col items-center border-l border-[#bbb]">
      {SIDE_APPS.map((a) => (
        <button key={a.label} aria-label={a.label} className="flex h-[63px] items-center">
          <svg viewBox="0 0 24 24" className="size-[26px]" fill="none">{a.icon}</svg>
        </button>
      ))}
      <button aria-label="추가" className="mt-1 flex h-[63px] items-center"><Plus className="size-[26px]" strokeWidth={1.5} /></button>
      <div className="mt-auto h-px w-[42px] bg-[#c4c4c4]" />
      <button aria-label="패널" className="mt-[22px]"><PanelRight className="size-6" strokeWidth={1.5} /></button>
      <button aria-label="설정" className="mt-9 mb-5"><Settings className="size-7" strokeWidth={1.5} /></button>
    </div>
  </aside>
);

/* ------------------------------------------------------------------ */
/* tistory page behind the window                                      */
/* ------------------------------------------------------------------ */

const TistoryPage = () => (
  <div className="relative flex min-h-0 flex-1 flex-col overflow-hidden bg-white">
    <header className="flex h-[111px] items-center border-b border-[#e9e9e9] pl-[86px]">
      <a href="#" className="relative font-[Inter,sans-serif] text-[38px] font-semibold text-black">
        tistory
        <span className="absolute top-1.5 right-0 h-1 w-[92px] bg-black" />
      </a>
    </header>
    <main className="flex min-h-0 flex-1">
      <div className="flex flex-1 flex-col justify-end pb-1 pl-[577px]">
        <p className="text-[26px] leading-8 text-[#333]">할 수 있습니다.</p>
      </div>
      <div className="flex w-[25px] flex-col items-center justify-between bg-[#f0f0f0] py-2">
        <Tri dir="up" />
        <div className="mt-[644px] h-[90px] w-[21px] bg-[#c1c1c1]" />
        <Tri />
      </div>
    </main>
    <footer className="flex h-[97px] items-center bg-[#f5f5f5] pr-[88px] pl-[85px] text-[21px] text-[#555]">
      <button className="flex items-center gap-2"><Monitor className="size-[26px]" strokeWidth={1.5} />미리보기</button>
      <div className="mr-[26px] ml-[21px] h-6 w-px bg-[#ddd]" />
      <button className="flex items-center gap-2">
        <svg viewBox="0 0 26 26" className="size-[26px]" fill="none" stroke="#333" strokeWidth="2"><path d="M2 4h9q0 7-9 11M15 2v13M15 8h3M5 18l6 6L25 3" /></svg>
        맞춤법
      </button>
      <div className="mr-7 ml-[21px] h-6 w-px bg-[#ddd]" />
      <button className="flex items-center gap-2">
        <svg viewBox="0 0 26 26" className="size-[26px]" fill="none" stroke="#333" strokeWidth="2"><path d="M25 2H6Q2 2 2 6t4 4h19M14 15H6q-4 0-4 4t4 5h8" /><circle cx="20" cy="19" r="4" /><path d="m22 22 3 3" /></svg>
        글감검색
      </button>
      <div className="mr-7 ml-[21px] h-6 w-px bg-[#ddd]" />
      <p className="flex items-center gap-1 text-base font-semibold text-[#c0c0c0]">
        <svg viewBox="0 0 24 24" className="size-[23px]" fill="none" stroke="#c6c6c6">
          <circle cx="12" cy="12" r="9" strokeWidth="5" />
          <circle cx="12" cy="11" r="3.5" strokeWidth="2" />
          <path d="M12 12v12" stroke="#f5f5f5" strokeWidth="3" />
        </svg>
        open source <span className="text-sm font-normal">/ DOWNLOAD</span>
      </p>
      <p className="ml-5 text-sm text-[#b5b5b5]">POWERED BY TINY</p>
      <p className="ml-auto text-[20px] text-[#808080]">자동 저장 완료 15:37:56</p>
      <button className="ml-5 flex h-[60px] w-[183px] items-center justify-center gap-3 rounded-full border border-[#d2d2d2] text-[20px] text-[#222]">
        임시저장 <span className="h-4 w-px bg-[#ccc]" /> <span className="text-[22px] text-[#ef5424]">10</span>
      </button>
      <button className="ml-3 h-[60px] w-[132px] rounded-full bg-black text-[20px] text-white">완료</button>
    </footer>
    <div className="absolute bottom-[60px] -left-[34px] size-[58px] rounded-full border-4 border-white bg-white shadow-[0_2px_12px_rgba(0,0,0,0.3)]">
      <div className="size-full rounded-full border-[5px] border-[#4b58f5]" />
    </div>
  </div>
);

/* ------------------------------------------------------------------ */
/* map canvas                                                          */
/* ------------------------------------------------------------------ */

type Pt = [number, number];

const parse = (s: string): Pt[] => s.split(' ').map((p) => p.split(',').map(Number) as Pt);
const north = (s: string): Pt[] => parse(s).map(([x, y]) => [1640 + x / 1.7, 260 + y / 3]);
const south = (s: string): Pt[] => parse(s).map(([x, y]) => [1640 + x / 1.7, 700 + y / 2.34]);
const toPath = (pts: Pt[]) => 'M' + pts.map(([x, y]) => `${x.toFixed(1)} ${y.toFixed(1)}`).join('L');

const rng = (seed: number) => () => {
  seed = (seed * 1664525 + 1013904223) % 4294967296;
  return seed / 4294967296;
};

const land: Pt[] = [
  ...parse('1100,264 1400,264 1662,264'),
  ...north('58,40 85,80 103,70 113,145 126,160 158,142 177,178 198,185 203,165 215,155 238,160 250,177 264,153 302,151 350,223 383,245 400,265 427,318 447,340 458,366 486,372 498,365 541,381 558,318 586,280 598,280 615,304 632,303 658,311 732,278 797,314 824,318 846,328 872,360 887,410 890,466 918,515 927,575 946,663 963,692 968,738 986,810 988,860 1012,905 1030,932 1072,1027 1078,1055 1095,1093 1113,1177 1130,1180 1160,1150 1184,1141 1208,1155 1233,1160 1312,1207'),
  ...south('1312,158 1277,196 1307,269 1252,317 1186,350 1161,373 1097,399 1056,405 1043,416 1028,418 1012,452 1025,468 1018,500 1013,570 987,572 948,629 955,670 972,720 985,770 1011,829 985,868 980,912 986,968 1012,1022 1018,1075 1017,1110 987,1150'),
  ...parse('1176,1192 1178,1162 1172,1146 1158,1138 1150,1118 1143,1090 1131,1075 1110,700 1180,380 1130,310 1118,285'),
];

const northLines = [
  '126,170 95,260', '126,200 160,270 215,340 205,400 165,470', '198,185 188,235 205,290 215,350', '198,270 170,290 160,270',
  '126,160 130,230 115,300 105,370 150,410', '458,366 430,460 415,460 400,495 300,520 270,570', '486,372 475,520 470,600',
  '474,372 474,500 430,530 420,620', '520,375 505,430 520,520 495,600', '541,381 550,450 580,530', '541,385 530,460 505,580',
  '615,304 625,380 620,450 600,500 580,560', '605,450 620,445 620,490 602,495 605,450',
  '648,311 655,365 672,410 700,440 750,443 773,422 770,355 726,361 711,290', '690,386 772,388', '672,410 690,386 712,345',
  '706,290 726,400 728,480 744,600 738,660 712,705 732,727', '714,290 731,400 733,480 750,600 746,660 724,700', '750,443 745,550',
  '600,500 640,522 687,570 720,565 745,545', '687,570 680,598 702,632 706,700', '732,727 700,740 650,752 600,785 575,820',
  '732,727 785,740 843,770 946,663', '843,770 842,860 810,935 764,980 712,967 700,990 645,992',
  '645,992 640,1010 665,1060 720,1105 765,1060 780,1010 773,970', '700,990 680,1060', '720,1105 716,1172 690,1175 688,1218 670,1200',
  '765,980 720,1070', '690,1090 705,1050 720,1070 712,1100',
  '764,1060 744,1187 795,1168 850,1190 887,1100 928,1047 988,1058 1025,1090 1072,1040', '744,1187 910,1370 970,1320 1050,1270 1112,1180',
  '1233,1160 1197,1190 1170,1280 1133,1360 1118,1405 1028,1470 998,1393 918,1370 875,1402 850,1468 810,1475 745,1400 715,1375 682,1327 650,1325 600,1355 568,1365 500,1370 478,1320 480,1305 510,1310 500,1350 480,1340',
  '1133,1360 1175,1382 1220,1430 1275,1500', '682,1327 662,1430 810,1478', '662,1430 650,1500', '675,1200 693,1275 694,1340',
  '470,600 475,640 480,730', '510,600 545,670 535,730', '535,720 582,728 578,770', '395,780 380,880 415,898 455,850',
  '380,880 378,960 345,1030 350,1110 390,1200 465,1222 525,1060', '390,1200 300,1260 240,1330', '420,1210 420,1250 440,1290 385,1335',
  '440,1290 480,1300', '385,1335 360,1410 320,1500', '541,1370 538,1410 500,1403 480,1490', '528,1340 560,1342 556,1360 527,1355 528,1340',
  '100,700 130,770 170,800 250,820 310,870 380,870', '210,730 195,780 250,830 290,840', '205,890 265,905 300,890 315,870',
  '180,880 150,940', '250,640 255,700 300,700 300,660', '130,630 105,700 135,775 160,700', '160,640 150,780', '185,650 170,790',
  '225,900 240,950 300,960 345,1030', '175,1040 230,1020 290,995 300,1060 345,1080', '200,1190 230,1140 300,1090 315,1170 245,1190 320,1260',
  '340,1080 350,1110', '250,1270 270,1320 300,1300 340,1300', '300,1330 345,1325 385,1335', '270,1430 300,1340', '320,1450 345,1330',
  '390,550 395,630', '420,460 400,560', '360,520 330,620 310,560 280,590', '350,530 380,600', '1085,1135 1098,1130 1108,1175 1090,1168 1085,1135',
  '553,658 561,645 569,660 562,673 553,658', '665,655 676,642 686,658 677,675 665,655', '370,1100 376,1088 383,1102 376,1112 370,1100',
  '408,905 413,895 422,908 414,918 408,905', '505,830 515,815 526,825 510,850 505,830',
  '170,800 165,880 210,890', '110,835 165,840', '320,870 315,960', '340,850 380,870 395,780', '290,840 350,740 380,700',
  '380,530 365,650', '440,530 450,620', '455,450 470,470 465,490 458,480 455,450', '100,1060 150,1050', '95,1290 150,1270 190,1270',
];

const southLines = [
  '475,158 510,170 535,215 590,245 640,235 662,85', '645,150 700,146 778,165',
  '810,120 765,190 745,250 690,290 640,330 605,350 575,335 540,340 510,352 458,385 430,335 380,330 330,280 265,258 215,230',
  '810,125 830,170 850,238 885,240 975,200 932,153 918,210 885,240', '662,85 745,110 810,120', '1028,115 975,200',
  '265,120 268,250', '305,120 302,255', '345,130 340,180 350,260', '378,150 385,240 405,325', '268,185 303,187', '510,175 530,240 540,340',
  '590,245 605,350', '782,225 800,220 838,250 825,275 780,290 778,240', '465,272 485,278 475,327 458,320 465,272', '562,180 580,160 608,168 575,188 562,180',
  '1238,155 1278,148', '1238,155 1236,205 1270,205', '700,390 718,392 728,410 702,415 700,390', '582,410 600,407 603,425 588,447 580,430 582,410',
  '732,490 805,600 837,602 830,650 803,720', '618,565 635,740', '705,275 720,370 732,490', '640,330 650,400 635,490', '655,320 680,380 670,490',
  '762,190 780,290 828,375', '835,655 900,655 948,629', '880,650 885,600 920,590 965,548 1012,570', '905,585 920,550 955,560', '920,590 948,629',
  '635,715 680,705 690,750 665,770 635,765 635,715', '690,700 725,685 765,710 760,745 700,775', '725,685 728,730', '803,720 800,850 810,930',
  '803,740 875,705 905,745', '765,760 745,890 760,940', '740,780 738,860', '670,770 690,850 655,960', '655,990 668,1035 655,1110 680,1147',
  '580,1000 580,1040 660,1020', '800,975 815,1010 817,1147', '760,960 810,1010', '875,1030 875,1100 900,1147', '825,940 875,1030 1018,1078',
  '845,965 880,970', '860,1000 900,980', '890,1025 915,1000 950,970 925,1040', '910,880 912,940', '880,885 980,890', '840,925 985,945',
  '925,790 965,780', '195,570 150,600 95,640', '195,570 240,590 345,560 435,465', '240,590 240,680 235,700 230,820 320,850',
  '310,355 360,440 345,555', '458,385 440,440 470,520 500,580', '95,380 155,400 165,530 195,570', '200,400 205,470 240,540 240,590',
  '290,450 250,560', '290,450 345,555', '170,680 150,740 230,800', '320,660 330,760 370,810', '350,590 400,660 345,640 355,580',
  '110,860 150,870 210,965 120,990', '210,965 200,1030 110,1050', '230,870 215,940 240,1020 210,1080', '95,1060 150,1090 130,1147',
  '260,910 340,915 335,970', '288,935 310,935 310,952 288,952 288,935', '400,860 470,870 500,900 470,1000 430,1060 400,1070',
  '540,620 600,690 610,740 560,750 520,730', '550,770 600,790 640,750', '500,680 560,750 590,780', '900,450 935,452 1000,385 1050,375 1056,405',
  '850,330 885,350 920,345', '890,290 910,320 945,290 985,290 985,330 1000,385', '940,220 985,225 990,280', '985,260 1035,235 1000,280',
];

// [points, number of strands, spread]
const rivers: [Pt[], number, number][] = [
  [north('80,440 95,480 125,505 150,525 185,565 240,575 280,610 330,670'), 8, 8],
  [north('95,555 140,560 200,590 240,600 290,640 335,680 365,695'), 6, 5],
  [north('335,670 360,690 400,775 440,800 460,850'), 4, 3],
  [north('460,850 500,895 530,930 565,940'), 3, 3],
  [north('80,890 110,930 140,980 150,1040 160,1130 185,1220 195,1320 225,1390 260,1440 320,1460 395,1495'), 6, 5],
  [north('330,670 380,650 410,632 470,635 510,590 575,570'), 4, 3],
  [north('150,500 165,430 168,370 150,350 110,385'), 2, 1],
  [north('150,510 190,470 230,420 250,340 270,290 280,270'), 3, 2],
  [north('160,515 240,520 280,490 310,450 330,415'), 3, 3],
  [north('462,850 470,930 520,1040 545,1110 555,1190 590,1230'), 2, 2],
  [north('205,620 215,690 245,770 250,800'), 2, 2],
  [north('610,1130 620,1170 670,1195'), 3, 3],
  [north('130,940 180,905 215,890'), 3, 2],
  [north('150,1040 190,1045 240,1030'), 3, 2],
  [south('190,-10 215,60 270,105 360,125 475,158'), 5, 2],
  [south('80,310 150,320 200,345 265,380'), 5, 3],
  [south('975,200 920,255 890,290 865,330 832,370 822,435 808,450 740,490 722,520 690,525 660,495 620,550 570,555 520,600 460,640'), 2, 2],
  [south('625,545 570,555 520,600 460,640 430,700 385,750 370,830 355,920 345,1000 335,1147'), 5, 5],
  [south('815,450 880,460 950,490 1025,468'), 2, 1],
  [south('970,740 905,750 880,830 865,900 810,940'), 2, 2],
  [south('810,940 740,975 650,960 570,990 510,1030 460,1090 410,1120 330,1145'), 5, 5],
  [south('250,965 300,965 340,985'), 3, 2],
  [south('0,875 40,890 50,950 90,985 140,990'), 4, 4],
  [parse('1440,1075 1448,1110 1460,1150 1480,1190'), 8, 8],
  [parse('1200,1190 1280,1140 1340,1110 1400,1075'), 3, 3],
];

const strand = ([pts, n, spread]: [Pt[], number, number], i: number) => {
  const r = rng(i * 97 + 13);
  let d = '';
  for (let k = 0; k < n; k++) {
    const off = (k / Math.max(1, n - 1) - 0.5) * 2 * spread;
    const out: Pt[] = [];
    for (let s = 0; s < pts.length - 1; s++) {
      const [ax, ay] = pts[s];
      const [bx, by] = pts[s + 1];
      const steps = Math.max(1, Math.round(Math.hypot(bx - ax, by - ay) / 9));
      for (let q = 0; q < steps; q++) {
        const t = q / steps;
        const j = spread > 2 ? 0.7 : 0.2;
        out.push([ax + (bx - ax) * t + off + (r() - 0.5) * spread * j, ay + (by - ay) * t + off * 0.5 + (r() - 0.5) * spread * j]);
      }
    }
    out.push(pts[pts.length - 1]);
    d += toPath(out);
  }
  return d;
};

// irregular parcel net inside a box
const parcels = (x0: number, y0: number, x1: number, y1: number, cell: number, seed: number, keep = 0.75) => {
  const r = rng(seed);
  const nx = Math.ceil((x1 - x0) / cell);
  const ny = Math.ceil((y1 - y0) / cell);
  const g: Pt[][] = [];
  for (let j = 0; j <= ny; j++) {
    g.push([]);
    for (let i = 0; i <= nx; i++) g[j].push([x0 + (i + (r() - 0.5) * 0.9) * cell, y0 + (j + (r() - 0.5) * 0.9) * cell]);
  }
  let d = '';
  for (let j = 0; j <= ny; j++)
    for (let i = 0; i <= nx; i++) {
      if (i < nx && r() < keep) d += toPath([g[j][i], g[j][i + 1]]);
      if (j < ny && r() < keep) d += toPath([g[j][i], g[j + 1][i]]);
    }
  return d;
};

// small closed plots scattered in an ellipse
const plots = (cx: number, cy: number, rx: number, ry: number, n: number, size: number, seed: number) => {
  const r = rng(seed);
  let d = '';
  for (let i = 0; i < n; i++) {
    const a = r() * 6.283;
    const q = Math.sqrt(r());
    const x = cx + Math.cos(a) * q * rx;
    const y = cy + Math.sin(a) * q * ry;
    const s = size * (0.5 + r());
    d += toPath([[x, y], [x + s, y + (r() - 0.3) * s], [x + s * 0.8, y + s * 1.2], [x - s * 0.3, y + s * 0.8]]) + 'Z';
  }
  return d;
};

const netPath = [
  parcels(1110, 258, 1190, 300, 4, 3, 0.95),
  parcels(1190, 255, 1330, 300, 13, 5),
  parcels(1330, 250, 1700, 300, 20, 7),
  parcels(1690, 510, 1740, 600, 16, 11, 0.6),
  parcels(1690, 830, 1760, 900, 15, 17, 0.6),
  parcels(1690, 760, 1860, 830, 26, 19, 0.5),
  parcels(1690, 1000, 1740, 1090, 12, 23, 0.6),
  parcels(1770, 1000, 1850, 1190, 17, 29, 0.6),
  parcels(1850, 1090, 1960, 1150, 13, 31, 0.65),
  parcels(1940, 1040, 2050, 1120, 17, 37, 0.6),
  parcels(1860, 920, 1990, 1060, 28, 41, 0.55),
  parcels(1830, 1150, 1960, 1195, 8, 43, 0.8),
  parcels(1140, 1070, 1430, 1195, 20, 47, 0.75),
  parcels(1430, 1070, 1560, 1195, 11, 53, 0.8),
  parcels(1560, 1070, 1780, 1195, 24, 59, 0.65),
  parcels(1690, 430, 1725, 470, 7, 61, 0.8),
  parcels(1820, 440, 1880, 480, 11, 67, 0.6),
].join('');

const plotPath = [
  plots(1925, 512, 18, 18, 26, 7, 2),
  plots(1968, 525, 10, 14, 8, 7, 4),
  plots(1986, 612, 22, 24, 60, 6, 6),
  plots(1962, 580, 14, 16, 12, 5, 8),
  plots(1757, 655, 10, 10, 14, 5, 10),
  plots(1976, 655, 6, 10, 8, 5, 12),
  plots(2045, 640, 14, 6, 7, 5, 14),
  plots(2222, 815, 8, 8, 9, 4, 16),
  plots(2155, 875, 12, 12, 12, 5, 18),
  plots(2170, 1000, 32, 10, 12, 6, 20),
  plots(2180, 830, 25, 25, 12, 5, 22),
  plots(1913, 950, 14, 14, 10, 7, 24),
  plots(1712, 475, 16, 14, 34, 5, 26),
  plots(1762, 498, 18, 9, 36, 5, 28),
  plots(1850, 492, 10, 8, 14, 5, 30),
  plots(1900, 700, 200, 240, 26, 5, 32),
  plots(1990, 1060, 150, 90, 26, 5, 34),
  plots(1700, 270, 16, 10, 4, 5, 36),
].join('');

const MapCanvas = () => (
  <svg viewBox="831 266 1577 924" preserveAspectRatio="xMaxYMid slice" className="size-full">
    <defs>
      <clipPath id="land"><path d={toPath(land) + 'Z'} /></clipPath>
    </defs>
    <path d={toPath(land) + 'Z'} fill="#8b5a97" stroke="#232323" strokeWidth="1.5" />
    <g clipPath="url(#land)" fill="none" stroke="#232323" strokeWidth="1.5" strokeLinejoin="round">
      <path d={northLines.map((l) => toPath(north(l))).join('')} />
      <path d={southLines.map((l) => toPath(south(l))).join('')} />
      <path d={netPath} strokeWidth="1.2" />
      <path d={plotPath} strokeWidth="1.2" />
      <path d={rivers.map(strand).join('')} />
    </g>
    <path d="M2020 558l3 1v9l3 4-5 8-1 7-3-8 1-5-3-3 4-4z" fill="#fff" stroke="#232323" />
  </svg>
);

/* ------------------------------------------------------------------ */
/* QGIS main window                                                    */
/* ------------------------------------------------------------------ */

const MENU: [string, string][] = [
  ['프로젝트', 'J'], ['편집', 'E'], ['보기', 'V'], ['레이어', 'L'], ['설정', 'S'], ['플러그인', 'P'], ['벡터', 'O'],
  ['래스터', 'R'], ['데이터베이스', 'D'], ['웹', 'W'], ['메시', 'M'], ['공간 처리', 'C'], ['도움말', 'H'],
];

// '|' handle, '/' separator, 'v' dropdown arrow, trailing '-' disabled, '+' pressed
const BAR_TOP = '| new open save layoutNew layoutMgr style | hand pan zoomIn+ zoomOut zoomFull zoomSel zoomLayer zoomNative- zoomLast zoomNext- mapView view3d bookmarkNew bookmarks clock refresh | select v selectForm v deselect v selectLoc | identify abacus gear sigma table v ruler v bubble gearPlay- v-';
const BAR_BOTTOM = '| dataSource geopackage vectorNew featherNew chip meshNew / virtualNew / | pencils- pencil saveEdit- digitize- vertex- v- attrs- trash- cut- copy- paste- undo- redo- | label pie / labelPin labelRed / labelPin- labelEye- labelMove- labelRot- labelEdit- | metasearch | python | help |';

const Handle = () => <span className="ml-3.5 h-4 w-1 border-x border-dotted border-[#aaa]" />;

const ToolBar = ({ spec }: { spec: string }) => (
  <div className="flex h-[51px] shrink-0 items-center overflow-hidden border-b border-[#b9b9b9] bg-gradient-to-b from-[#fafafa] to-[#f0f0f0] pr-2">
    {spec.split(' ').map((s, i) => {
      if (s === '|') return <span key={i} className={`flex w-6 shrink-0 ${i === 0 ? '-ml-1.5' : ''}`}><Handle /></span>;
      if (s === '/') return <span key={i} className="mx-1 h-[34px] w-px shrink-0 bg-[#dcdcdc]" />;
      const off = s.endsWith('-');
      const on = s.endsWith('+');
      const name = s.replace(/[-+]$/, '');
      if (name === 'v') return <span key={i} className="flex w-[18px] shrink-0 justify-center"><Tri className="size-2.5" color={off ? '#aaa' : '#444'} /></span>;
      return (
        <button key={i} aria-label={name} disabled={off} className={`flex h-[39px] w-[41px] shrink-0 items-center justify-center rounded ${on ? 'border border-[#bbb] bg-[#dcdcdc]' : ''}`}>
          <Ico name={name} className="size-[30px]" off={off} />
        </button>
      );
    })}
  </div>
);

const VBAR: [string, boolean][] = [
  ['vectorAdd', false], ['rasterAdd', false], ['meshAdd', false], ['commaAdd', false], ['featherAdd', false], ['virtualAdd', false],
  ['postgis', true], ['wms', false], ['wcs', false], ['wfs', false], ['vectorNew', true],
];

const DockTitle = ({ children }: { children: React.ReactNode }) => (
  <div className="flex h-6 items-center gap-1 pr-[11px] pl-1 text-[19px] text-black">
    <h2 className="flex-1">{children}</h2>
    <button aria-label="분리" className="flex size-[11px] items-center justify-center rounded-xs border border-[#777]"><Copy className="size-[7px]" /></button>
    <button aria-label="닫기" className="flex size-[11px] items-center justify-center rounded-xs border border-[#777]"><X className="size-[9px]" strokeWidth={4} /></button>
  </div>
);

const ScrollRail = ({ children }: { children: React.ReactNode }) => (
  <div className="flex w-[21px] shrink-0 flex-col border-l border-[#bcbcbc] bg-[#e4e4e4]">
    <div className="flex h-5 shrink-0 items-center justify-center border-b border-[#bcbcbc] bg-white"><Tri dir="up" className="size-[11px]" /></div>
    {children}
    <div className="mt-auto flex h-5 shrink-0 items-center justify-center border-t border-[#bcbcbc] bg-white"><Tri className="size-[11px]" /></div>
  </div>
);

const BROWSER: { icon: string; name: string; level: number; open?: boolean }[] = [
  { icon: 'star', name: '즐겨찾기', level: 0 },
  { icon: 'bookmarks', name: '공간 북마크', level: 0, open: true },
  { icon: 'folder', name: '사용자 북마크', level: 1 },
  { icon: 'folder', name: '프로젝트 북마크', level: 1 },
  { icon: 'projectHome', name: '프로젝트 홈', level: 0, open: false },
  { icon: 'home', name: '홈', level: 0, open: true },
  { icon: 'folder', name: '.cache', level: 1, open: false },
];

const Check = ({ label, hidden = false }: { label: string; hidden?: boolean }) => (
  <label className="flex items-center gap-2">
    <span className="relative flex size-5">
      <input type="checkbox" defaultChecked className="size-5 appearance-none border border-[#b5b5b5] bg-white" />
      <svg viewBox="0 0 20 20" className="pointer-events-none absolute inset-0" fill="none" stroke="#000" strokeWidth="2.5"><path d="M4.500 10 9 15.500 15 3" /></svg>
    </span>
    <span className={hidden ? 'sr-only' : ''}>{label}</span>
  </label>
);

const LAYERS = [
  { name: 'LSMD_CONT_LDREG_29110', swatch: 'size-5 border border-[#3b4a80] bg-[#6462ad]', active: true },
  { name: 'roads', swatch: 'h-0.5 w-5 bg-[#9bb79d]', active: false },
  { name: 'buildings', swatch: 'size-5 border border-[#4b3b3d] bg-[#f5a3ab]', active: false },
  { name: 'protected_areas', swatch: 'size-5 border border-[#574713] bg-[#d6b438]', active: false },
];

const Docks = () => (
  <div className="flex w-[400px] shrink-0 flex-col border-l border-[#b9b9b9] bg-[#efefef]">
    <DockTitle>탐색기</DockTitle>
    <div className="flex h-10 items-center gap-[9px] pl-2.5">
      {['addSquare', 'refresh', 'funnel', 'collapse', 'info'].map((n) => (
        <button key={n} aria-label={n}><Ico name={n} className="size-6" /></button>
      ))}
    </div>
    <div className="mr-2.5 flex h-[196px] border border-[#b9b9b9] bg-white">
      <ul className="flex-1 overflow-hidden pt-px text-[19px] text-black">
        {BROWSER.map((b) => (
          <li key={b.name} className={`flex h-[27px] items-center ${b.level ? 'pl-[23px]' : 'pl-1'}`}>
            <span className="flex w-[18px] shrink-0">
              {b.open !== undefined && <Tri dir={b.open ? 'down' : 'right'} className="size-3" />}
            </span>
            <Ico name={b.icon} className="mr-2 size-[22px]" />
            {b.name}
          </li>
        ))}
      </ul>
      <ScrollRail><div className="h-10 border-b border-[#bcbcbc] bg-white" /></ScrollRail>
    </div>
    <div className="mx-auto mt-1 h-1 w-4 border-y border-dotted border-[#aaa]" />
    <DockTitle>레이어</DockTitle>
    <div className="flex h-10 items-center gap-[9px] pl-2.5">
      {['paint', 'groupAdd', 'eye', 'funnelMenu', 'epsFilter'].map((n) => (
        <button key={n} aria-label={n}><Ico name={n} className="size-6" /></button>
      ))}
      <Tri className="-ml-1 size-3" />
      {['expand', 'collapse', 'removeSquare'].map((n) => (
        <button key={n} aria-label={n}><Ico name={n} className="size-6" /></button>
      ))}
    </div>
    <ul className="mt-[3px] mr-2.5 flex-1 border border-[#b9b9b9] bg-white text-lg text-black">
      {LAYERS.map((l) => (
        <li key={l.name} className={`flex h-[27px] items-center pl-[33px] ${l.active ? 'bg-[#efefef]' : ''}`}>
          <Check label={l.name} hidden />
          <span className="mr-[7px] ml-[7px] flex w-5 items-center"><span className={l.swatch} /></span>
          <span className={l.active ? 'font-bold underline underline-offset-3' : 'font-bold'}>{l.name}</span>
          {l.active && <span className="mr-2 ml-auto flex size-6 items-center justify-center rounded border border-[#ddd] bg-[#e5eaf0] text-lg font-bold text-[#4a6d99]">?</span>}
        </li>
      ))}
    </ul>
  </div>
);

const Spin = ({ label, value, className }: { label: string; value: string; className: string }) => (
  <span className={`flex h-[29px] rounded-sm border border-[#b5b5b5] bg-white ${className}`}>
    <input aria-label={label} defaultValue={value} className="w-full min-w-0 flex-1 px-1.5 outline-none" />
    <span className="flex w-[17px] flex-col items-center justify-center gap-1 border-l border-[#ccc] bg-[#f7f7f7]">
      <Tri dir="up" className="size-2.5" />
      <Tri className="size-2.5" />
    </span>
  </span>
);

const StatusBar = () => (
  <div className="flex h-[37px] shrink-0 items-center bg-[#efefef] pr-7 pl-[3px] text-base text-black">
    <div className="flex h-[30px] w-[522px] items-center gap-2 rounded-sm border border-[#b0b0b0] bg-white pl-2.5">
      <Search className="size-5 text-[#888]" />
      <input aria-label="위치 검색" placeholder="위치를 찾으려면 입력하세요 (Ctrl+K)" className="flex-1 text-[19px] outline-none placeholder:text-[#888]" />
    </div>
    <label className="ml-auto flex items-center gap-1">좌표<input defaultValue="190766,278525" className="h-[29px] w-[121px] rounded-sm border border-[#b5b5b5] bg-white text-center text-[15px]" /></label>
    <svg viewBox="0 0 24 24" className="mr-4 ml-1 size-6" fill="none" stroke="#000" strokeWidth="1.5">
      <path d="M4 6q-2-5 2-5t4 5l2 7-4 1zM12 7q3-5 5-3t-2 6z" fill="#fff" />
      <path d="M4 9l8 4" />
      <rect x="9" y="11" width="10" height="12" rx="5" transform="rotate(-25 14 16)" fill="#fff" />
      <path d="m10 15 8-4M13 12l2 5" />
    </svg>
    <label className="flex items-center gap-1">
      축척
      <span className="relative">
        <select className="h-[26px] w-[121px] appearance-none rounded-sm border border-[#b5b5b5] bg-white pl-0.5 text-[15px]"><option>:1360655104</option></select>
        <Tri className="absolute top-2 right-2.5 size-3" />
      </span>
    </label>
    <svg viewBox="0 0 20 24" className="mr-2.5 ml-3.5 h-6 w-5"><path d="M5 12V7a5 5 0 0 1 10 0v5" fill="none" stroke="#999" strokeWidth="2.5" /><path d="M1 11h18v12H1z" fill="#6a6a6a" /></svg>
    <span className="mr-1">확대경</span>
    <Spin label="확대경" value="100%" className="w-[114px]" />
    <span className="mr-2 ml-2.5">회전</span>
    <Spin label="회전" value="0.0 °" className="mr-2 w-[107px]" />
    <Check label="렌더링" />
    <button className="ml-4 flex items-center text-base">
      <svg viewBox="0 0 24 24" className="size-6" fill="#999" stroke="#666"><circle cx="12" cy="12" r="10" /><path d="M2 12h20M12 2v20M4 6h16M4 18h16M8 3q-4 9 0 18M16 3q4 9 0 18" fill="none" stroke="#eee" /></svg>
      EPSG:4326
    </button>
    <svg viewBox="0 0 24 24" className="ml-7 size-6"><path d="M11 20q5 0 9 4v-8" fill="#707070" /><circle cx="12" cy="11" r="10" fill="#707070" /></svg>
    <svg viewBox="0 0 24 24" className="ml-3 size-[22px]" fill="#a5a5a5" stroke="#888">{art.puzzle}</svg>
  </div>
);

const QgisWindow = () => (
  <section className="absolute top-[85px] right-[146px] bottom-[139px] left-[357px] flex flex-col overflow-hidden rounded-xl border-2 border-[#b0b0b0] bg-[#f0f0f0] shadow-[0_24px_60px_rgba(0,0,0,0.3)]">
    <div className="flex h-[41px] shrink-0 items-center gap-2 bg-[#f3f3f3] pr-[22px] pl-2.5 text-[17px] text-[#999]">
      <QgisLogo className="size-6" />
      <h1>*basic_2_2 — QGIS</h1>
      <div className="ml-auto flex items-center gap-[52px]">
        <Minus className="size-[18px]" strokeWidth={1.5} />
        <Square className="size-[18px]" strokeWidth={1.5} />
        <X className="size-5" strokeWidth={1.5} />
      </div>
    </div>
    <nav className="flex h-[30px] shrink-0 items-center gap-5 border-b border-[#d5d5d5] bg-[#efefef] pl-[13px] text-[19px] text-[#a0a0a0]">
      {MENU.map(([n, k]) => (
        <button key={n} className="whitespace-nowrap">{n} <span className="text-[17px]">(<u>{k}</u>)</span></button>
      ))}
    </nav>
    <ToolBar spec={BAR_TOP} />
    <ToolBar spec={BAR_BOTTOM} />
    <div className="flex min-h-0 flex-1">
      <div className="flex w-[68px] shrink-0 flex-col pl-[9px]">
        <span className="mt-3 mb-[3px] ml-5 h-1 w-4 border-y border-dotted border-[#aaa]" />
        {VBAR.map(([n, menu]) => (
          <button key={n} aria-label={n} className="flex h-10 items-center gap-2"><Ico name={n} className="size-8" />{menu && <Tri className="size-2.5" />}</button>
        ))}
      </div>
      <Docks />
      <div className="min-w-0 flex-1 border-l border-[#b9b9b9] bg-white"><MapCanvas /></div>
    </div>
    <StatusBar />
  </section>
);

/* ------------------------------------------------------------------ */
/* layer properties dialog                                             */
/* ------------------------------------------------------------------ */

const PAGES = [
  ['info', '정보'], ['source', '원본'], ['symbology', '심볼'], ['labelBold', '라벨'], ['mask', '마스크'], ['cube', '3D 뷰'],
  ['pie', '도표'], ['fields', '필드'], ['form', '속성 양식'], ['join', '결합'], ['storage', '보조 저장소'], ['action', '액션'],
  ['display', '디스플레이'], ['rendering', '렌더링'], ['clock', '시계열'], ['variables', '변수'], ['metadata', '메타데이터'],
];

const btn = 'rounded-sm border border-[#b5b5b5] bg-gradient-to-b from-white to-[#f0f0f0] text-black';

const SymbolTree = () => (
  <div className="flex h-[189px] items-start">
    <div className="flex h-full w-[198px] items-center justify-center">
      <div className="mr-[9px] size-[61px] border-2 border-[#232323] bg-[#8b5a97]" />
    </div>
    <ul className="h-full w-[346px] border border-[#b9b9b9] bg-white">
      <li className="flex h-[27px] items-center gap-2 bg-[#efefef] pl-2 font-bold"><Tri className="size-3" /><span className="ml-1 size-[19px] border border-[#3b4a80] bg-[#6462ad]" />채우기</li>
      <li className="flex h-[27px] items-center gap-2 pl-[63px]"><span className="size-[19px] border border-[#555] bg-[#8b5a97]" />단순 채우기</li>
    </ul>
    <div className="mt-2 ml-auto grid grid-cols-2 gap-x-2.5 gap-y-[13px]">
      <button aria-label="추가" className={`${btn} flex h-8 w-[38px] items-center justify-center`}><svg viewBox="0 0 24 24" className="size-[22px]">{art.green}<path d="M12 5v14M5 12h14" stroke="#4f8f53" strokeWidth="2.5" /></svg></button>
      <button aria-label="위로" className={`${btn} flex h-8 w-[38px] items-center justify-center opacity-70`}><Tri dir="up" className="size-[22px]" color="#c9cdd1" /></button>
      <button aria-label="제거" className={`${btn} flex h-8 w-[38px] items-center justify-center opacity-70`}><span className="h-2 w-5 border border-[#ddc9c9] bg-[#eedcdc]" /></button>
      <button aria-label="아래로" className={`${btn} flex h-8 w-[38px] items-center justify-center opacity-70`}><Tri className="size-[22px]" color="#c9cdd1" /></button>
      <button aria-label="복제" className={`${btn} flex h-8 w-[38px] items-center justify-center opacity-70`}>
        <svg viewBox="0 0 24 24" className="size-[22px]" fill="#f4f4f4" stroke="#c4c4c4" strokeWidth="1.3"><path d="M2 5h14v18H2zM6 1h15v18H6z" /><path d="M16 15h7v7h-7z" fill="#dcd8c8" /></svg>
      </button>
      <button aria-label="잠금" className={`${btn} flex h-8 w-[38px] items-center justify-center opacity-70`}><svg viewBox="0 0 24 24" className="size-[22px]"><path d="M3 11h18v12H3z" fill="#d8d4c8" /><path d="M8 7q0-5 5-5t5 5v4" stroke="#d5d5d5" strokeWidth="2.5" fill="none" /></svg></button>
    </div>
  </div>
);

const Rule = ({ className }: { className: string }) => <div className={`h-px shrink-0 bg-[#a5a5a5] ${className}`} />;

const Properties = () => (
  <div className="flex min-w-0 flex-1 flex-col pt-1 pr-[3px] pl-1.5 text-[19px] leading-6 text-black">
    <label className="relative block">
      <span className="sr-only">심볼 유형</span>
      <span className="pointer-events-none absolute top-1.5 left-2"><Ico name="single" className="size-5" /></span>
      <select className={`${btn} block h-8 w-full appearance-none pl-8`}><option>단일 심볼</option></select>
      <Tri className="absolute top-2.5 right-3 size-3" />
    </label>
    <div className="mt-[9px]"><SymbolTree /></div>
    <Rule className="mt-[9px]" />
    <div className="mt-[11px] mr-3.5 grid grid-cols-[81px_1fr] items-center gap-y-2.5">
      <span>색상</span>
      <div className="flex gap-px">
        <button aria-label="색상" className={`${btn} h-[29px] flex-1 p-[3px]`}><span className="block h-full rounded-xs bg-[#8b5a97]" /></button>
        <button aria-label="색상 메뉴" className={`${btn} flex w-[18px] items-center justify-center`}><Tri className="size-[11px]" /></button>
      </div>
      <label htmlFor="opacity" className="whitespace-nowrap">불투명도</label>
      <div className="flex items-center">
        <input
          id="opacity"
          type="range"
          defaultValue={100}
          className="h-2 min-w-0 flex-1 appearance-none rounded-xs border border-[#1567b5] bg-[#188cf0] [&::-webkit-slider-thumb]:h-5 [&::-webkit-slider-thumb]:w-5 [&::-webkit-slider-thumb]:appearance-none [&::-webkit-slider-thumb]:rounded-sm [&::-webkit-slider-thumb]:border [&::-webkit-slider-thumb]:border-[#aaa] [&::-webkit-slider-thumb]:bg-white"
        />
        <Spin label="불투명도" value="100.0 %" className="ml-1 w-[100px] text-lg" />
        <svg viewBox="0 0 28 24" className="ml-3.5 h-6 w-[30px]"><path d="M7 1h13v21H7v-5l-6-5 6-5z" fill="#eee" stroke="#666" strokeWidth="1.5" /><path d="M10 6h7M10 11h7M10 16h7" stroke="#666" strokeWidth="2" /><path d="M17 17h11l-5.500 6z" fill="#444" /></svg>
      </div>
      <label htmlFor="unit">단위</label>
      <span className="relative">
        <select id="unit" className={`${btn} block h-[25px] w-full appearance-none pl-1 leading-none`}><option>밀리미터</option></select>
        <Tri className="absolute top-1.5 right-2.5 size-3" />
      </span>
    </div>
    <Rule className="mt-[5px] mr-3.5" />
    <div className="mt-2 flex h-[26px] shrink-0 items-center">
      <div className="flex h-full w-[589px] items-center rounded-sm border border-[#b5b5b5] bg-white pr-2.5 pl-3">
        <Search className="size-5 text-[#888]" />
        <input aria-label="심볼 검색" defaultValue="즐겨찾기" className="ml-2 h-6 min-w-0 flex-1 outline-none" />
        <svg viewBox="0 0 22 18" className="mr-5 h-4 w-5"><path d="M0 9 6 0h16v18H6z" fill="#8f8f8f" /><path d="m10 5 8 8M18 5l-8 8" stroke="#fff" strokeWidth="2" /></svg>
        <Tri className="size-3" />
      </div>
      <button aria-label="스타일 관리자" className="ml-2.5"><Ico name="style" className="size-[22px]" /></button>
    </div>
    <div className="mt-[7px] mr-3.5 flex h-[191px] shrink-0 border border-[#b9b9b9] bg-white">
      <div className="flex flex-1 pt-[26px] text-lg">
        <figure className="flex w-[230px] flex-col items-center">
          <div className="h-[98px] w-[115px] rounded-xs border-2 border-black bg-[radial-gradient(circle_farthest-corner_at_0_0,#0d2887_0%,#6200a5_18%,#a01a9c_34%,#cb4679_50%,#ee7b51_66%,#fdab33_84%,#f5e626_100%)]" />
          <figcaption className="mt-6 whitespace-pre">gradient   plasma</figcaption>
        </figure>
        <figure className="flex w-[230px] flex-col items-center">
          <div className="my-px h-24 w-28 border border-[#ddd] bg-[#959595]" />
          <figcaption className="mt-6">gray 3 fill</figcaption>
        </figure>
      </div>
      <ScrollRail><div className="h-10 border-b border-[#bcbcbc] bg-white" /></ScrollRail>
    </div>
    <div className="mt-[7px] mr-3.5 flex h-[30px] shrink-0 items-center">
      <button aria-label="아이콘 보기" className="mr-1.5 flex h-[30px] w-8 items-center justify-center rounded-sm border border-[#aaa] bg-[#dadada]">
        <svg viewBox="0 0 20 20" className="size-5"><path d="M.5.500h19v19H.5z" fill="#eaf2fb" stroke={BLUE} /><path d="M4 2v16M10 2v16M16 2v16" stroke={BLUE} strokeWidth="4" strokeDasharray="4 2" /></svg>
      </button>
      <button aria-label="목록 보기"><Ico name="table" className="size-[22px]" /></button>
      <button className={`${btn} ml-auto h-[29px] w-[107px] whitespace-nowrap`}>심볼 저장···</button>
      <button className={`${btn} ml-1.5 flex h-[29px] w-20 items-center justify-between pr-1 pl-3`}>확장<Tri className="size-3" /></button>
    </div>
    <button className="mt-7 flex h-7 shrink-0 items-center gap-2.5 pl-0.5 text-[20px] font-bold"><Tri dir="right" className="size-3" color="#222" />레이어 렌더링</button>
    <div className="mt-[9px] flex shrink-0 gap-2.5">
      <button className={`${btn} mr-auto flex h-[29px] w-[83px] items-center justify-between px-1`}>스타일<Tri className="size-3" /></button>
      <button className="h-[29px] w-[79px] rounded-sm border border-[#4aa3e8] bg-gradient-to-b from-white to-[#e8f0f8]">확인</button>
      <button className={`${btn} h-[29px] w-[79px]`}>취소</button>
      <button className={`${btn} h-[29px] w-[79px]`}>적용</button>
      <button className={`${btn} h-[29px] w-[79px]`}>도움말</button>
    </div>
  </div>
);

const LayerDialog = () => (
  <section className="absolute top-[288px] left-[849px] h-[784px] w-[843px] border-[6px] border-[#fe0000] shadow-[0_20px_50px_rgba(0,0,0,0.3)]">
    <div className="mr-[5px] flex h-full flex-col overflow-hidden rounded-lg bg-[#efefef]">
      <div className="flex h-[43px] shrink-0 items-center gap-1.5 bg-[#f3f3f3] pr-3.5 pl-3 text-lg text-black">
        <QgisLogo className="size-6" />
        <h2>레이어 속성 — LSMD_CONT_LDREG_29110 — 심볼</h2>
        <button aria-label="닫기" className="ml-auto"><X className="size-[22px]" strokeWidth={1.5} /></button>
      </div>
      <div className="flex min-h-0 flex-1">
        <div className="flex w-[177px] shrink-0 flex-col bg-[#5c5c5c]">
          <div className="flex h-[31px] shrink-0 items-center gap-3 border border-[#3daef5] bg-white pl-2.5">
            <Search className="size-5 text-[#888]" />
            <span className="h-[18px] w-0.5 shrink-0 bg-black" />
            <input aria-label="옵션 검색" className="min-w-0 flex-1 outline-none" />
          </div>
          <div className="mt-[9px] flex min-h-0 flex-1">
            <ul className="flex-1 overflow-hidden text-[19px] text-white">
              {PAGES.map(([icon, name]) => (
                <li key={name} className={`flex h-[41px] items-center gap-2 pl-1.5 whitespace-nowrap ${name === '심볼' ? 'bg-[#f0f0f0] text-black' : ''}`}>
                  <Ico name={icon} className="size-7" />
                  {name}
                </li>
              ))}
            </ul>
            <ScrollRail><div className="h-[495px] border-b border-[#bcbcbc] bg-white" /></ScrollRail>
          </div>
        </div>
        <Properties />
      </div>
    </div>
  </section>
);

const Annotation = () => (
  <div className="pointer-events-none absolute top-[330px] left-[590px] h-[340px] w-[340px]">
    <svg viewBox="0 0 340 340" className="size-full" fill="#fe0000">
      <path d="M201 321 313 40" stroke="#fe0000" strokeWidth="4" />
      <path d="M330 4 307 36l19 8z" stroke="#fe0000" />
    </svg>
    <strong className="absolute bottom-0 left-0 text-[52px] leading-none font-black whitespace-nowrap text-[#fe0000]">더블클릭</strong>
  </div>
);

export default function App() {
  return (
    <div className="relative flex h-screen w-full flex-col overflow-hidden border-3 border-[#fe0000] bg-white font-['Open_Sans','Noto_Sans_CJK_KR',sans-serif]">
      <TabStrip />
      <div className="flex min-h-0 flex-1">
        <div className="flex min-w-0 flex-1 flex-col">
          <AddressBar />
          <Bookmarks />
          <TistoryPage />
        </div>
        <SideBar />
      </div>
      <QgisWindow />
      <LayerDialog />
      <Annotation />
    </div>
  );
}
